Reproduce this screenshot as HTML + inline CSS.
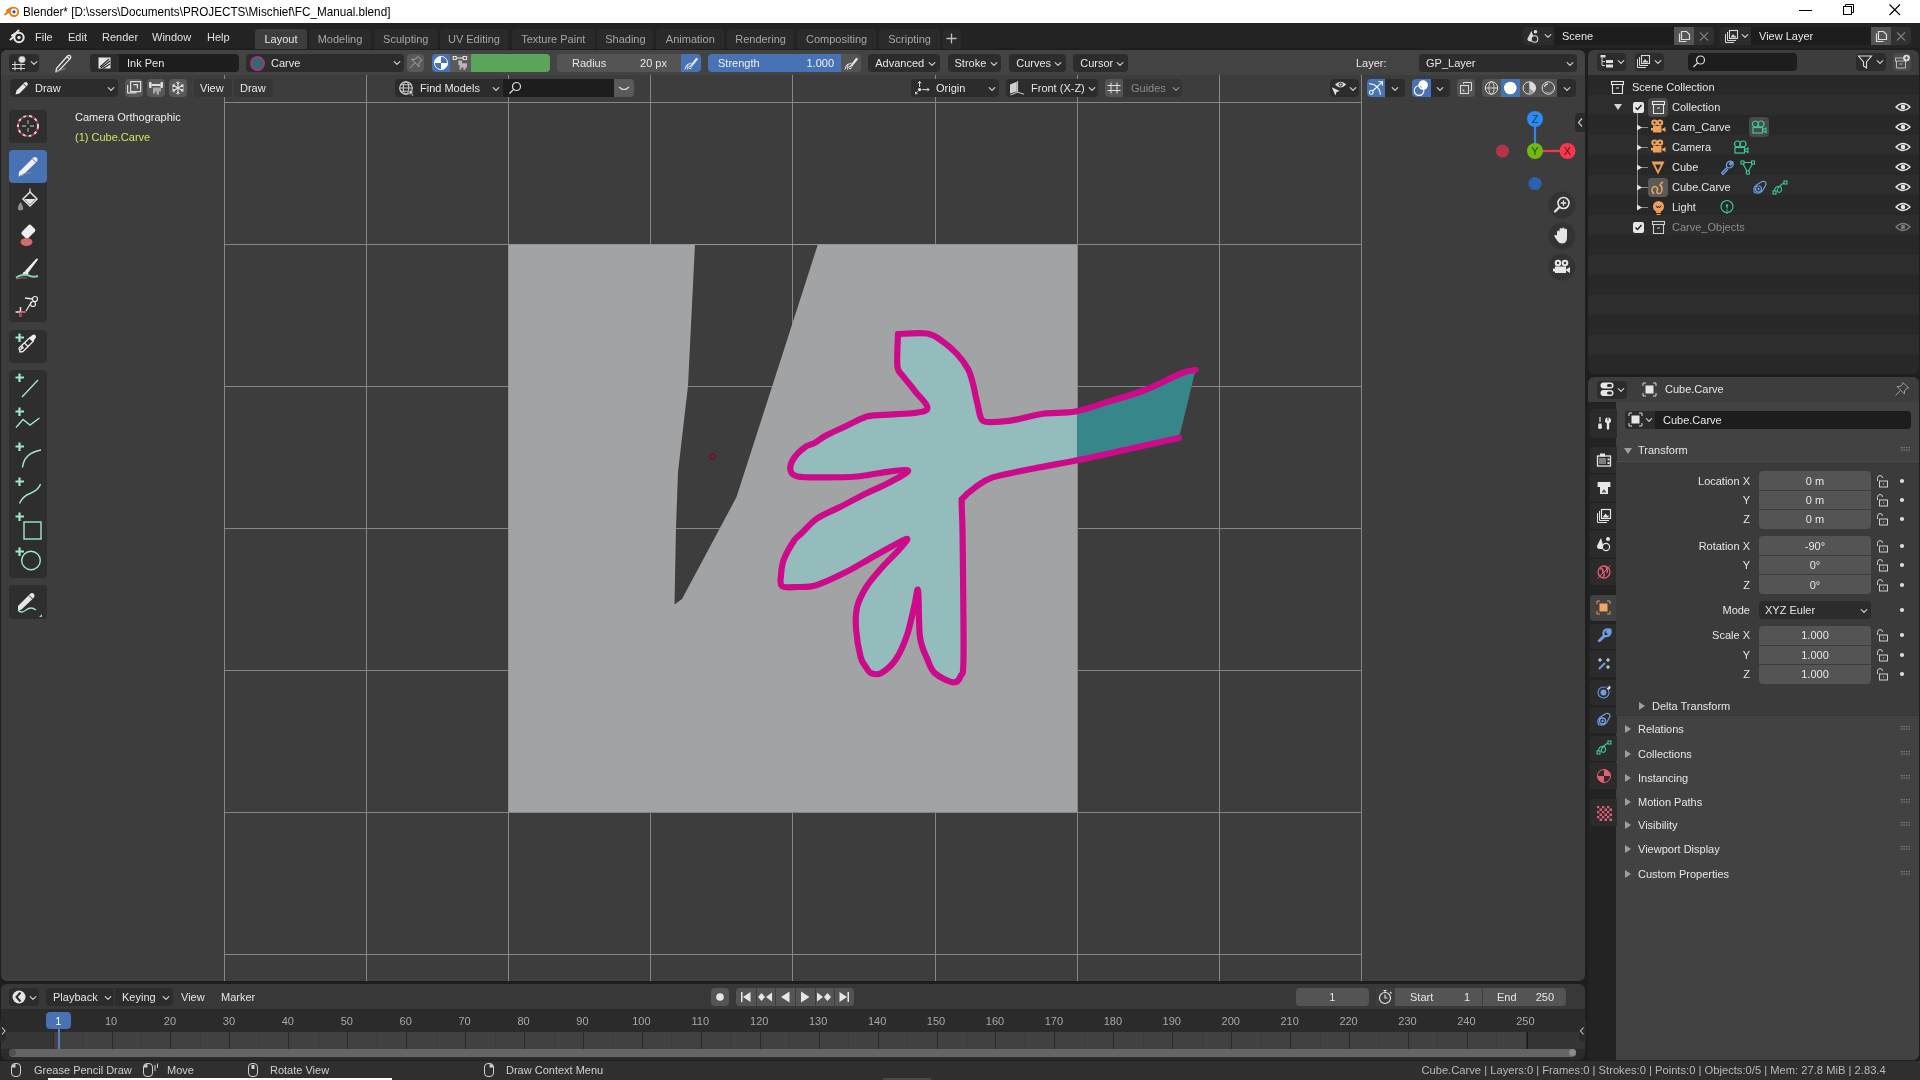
<!DOCTYPE html><html><head><meta charset="utf-8"><style>
*{margin:0;padding:0;box-sizing:border-box}
html,body{width:1920px;height:1080px;overflow:hidden;background:#1e1e1e;font-family:"Liberation Sans",sans-serif}
.a{position:absolute}
.t{position:absolute;height:16px;line-height:16px;white-space:nowrap}
#root{position:absolute;left:0;top:0;width:1920px;height:1080px;will-change:transform}
svg{position:absolute;overflow:visible}
</style></head><body><div id="root"><div class="a" style="left:0px;top:0px;width:1920px;height:23px;background:#ffffff;"></div><div class="a" style="left:0px;top:23px;width:1920px;height:27px;background:#232323;"></div><div class="a" style="left:1px;top:50px;width:1584px;height:931px;background:#3d3d3d;border-radius:6px;"></div><svg class="a" style="left:0;top:0" width="1920" height="1080" viewBox="0 0 1920 1080"><defs><clipPath id="vp"><rect x="1" y="75" width="1584" height="906"/></clipPath><clipPath id="sq"><rect x="509" y="244" width="568" height="568"/></clipPath><clipPath id="nsq"><path d="M0 0H1920V1080H0Z M509 244V812H1077V244Z" clip-rule="evenodd"/></clipPath></defs><g clip-path="url(#vp)"><rect x="224" y="75" width="1" height="906" fill="#868686"/><rect x="366" y="75" width="1" height="906" fill="#868686"/><rect x="508" y="75" width="1" height="906" fill="#868686"/><rect x="650" y="75" width="1" height="906" fill="#868686"/><rect x="792" y="75" width="1" height="906" fill="#868686"/><rect x="935" y="75" width="1" height="906" fill="#868686"/><rect x="1077" y="75" width="1" height="906" fill="#868686"/><rect x="1219" y="75" width="1" height="906" fill="#868686"/><rect x="1361" y="75" width="1" height="906" fill="#868686"/><rect x="224" y="102" width="1137" height="1" fill="#868686"/><rect x="224" y="244" width="1137" height="1" fill="#868686"/><rect x="224" y="386" width="1137" height="1" fill="#868686"/><rect x="224" y="528" width="1137" height="1" fill="#868686"/><rect x="224" y="670" width="1137" height="1" fill="#868686"/><rect x="224" y="812" width="1137" height="1" fill="#868686"/><rect x="224" y="954" width="1137" height="1" fill="#868686"/><path fill="#a2a3a5" fill-rule="evenodd" d="M508.6 244.6H1077V812H508.6Z M695 244L688 386L678 472L676 528L674.5 604.5L682 599L720 528L736.5 497L818 244Z"/><circle cx="712.4" cy="456.4" r="2.6" fill="#8a1a3a" stroke="#4a0a20" stroke-width="0.8"/></g></svg><svg class="a" style="left:0;top:0" width="1920" height="1080" viewBox="0 0 1920 1080"><defs><clipPath id="sq2"><rect x="509" y="244" width="568" height="568"/></clipPath><clipPath id="nsq2"><path d="M0 0H1920V1080H0Z M509 244V812H1077V244Z" clip-rule="evenodd"/></clipPath></defs><path d="M898 334 C902.6 333.9 920.0 332.4 927 333.5 C934.0 334.6 937.2 337.7 942 341 C946.8 344.3 952.8 349.5 957 354 C961.2 358.5 965.4 364.2 968 369 C970.6 373.8 971.5 378.4 973 384 C974.5 389.6 976.0 398.2 977.5 404 C979.0 409.8 979.4 417.7 982.5 420.5 C985.6 423.3 991.6 421.9 997 421.8 C1002.4 421.7 1008.6 420.9 1016 419.6 C1023.4 418.3 1033.5 415.0 1043 413.7 C1052.5 412.4 1065.1 413.4 1075.5 411.5 C1085.9 409.6 1096.9 405.2 1108 401.8 C1119.1 398.4 1133.2 394.6 1145 390 C1156.8 385.4 1173.9 376.2 1182 373 C1190.1 369.8 1193.3 370.5 1195.5 370 L1179 438 C1174.0 439.1 1159.4 442.3 1148 444.8 C1136.6 447.3 1119.4 451.2 1108 453.7 C1096.6 456.2 1088.8 457.9 1077 460.3 C1065.2 462.7 1047.5 465.8 1034 468.5 C1020.5 471.2 1002.1 474.3 992.6 477.4 C983.1 480.5 979.5 484.4 974.8 487.7 C970.1 491.0 965.1 495.6 963 498 C960.9 500.4 961.8 496.8 961.7 503 C961.6 509.2 962.3 512.3 962.6 537 C962.9 561.7 963.8 635.2 963.5 657.4 C963.2 679.6 962.3 672.0 960.7 676 C959.1 680.0 957.4 682.9 953.3 682.4 C949.2 681.9 938.9 676.8 934.8 673.1 C930.7 669.4 929.8 665.1 927.4 659.3 C925.0 653.5 921.5 648.0 920 637 C918.5 626.0 919.0 595.7 918.1 590.7 C917.2 585.7 916.2 598.5 914.4 605.6 C912.6 612.7 910.0 626.6 907 635.2 C904.0 643.8 900.0 653.2 895.9 659.3 C891.8 665.4 885.1 670.9 881.1 673.1 C877.1 675.3 873.3 674.0 870.9 673.1 C868.5 672.2 867.9 670.1 866.3 667.6 C864.7 665.1 862.3 663.5 860.7 657.4 C859.1 651.3 856.7 637.6 856.1 629.6 C855.5 621.6 855.4 614.2 857 607.4 C858.6 600.6 862.4 593.2 866.3 587 C870.2 580.8 875.8 574.6 881.1 568.5 C886.4 562.4 895.6 553.7 899.6 549 C903.6 544.3 910.2 537.7 906.1 538.9 C902.0 540.1 883.6 551.0 873.7 556.5 C863.8 562.0 853.2 568.5 844 573.1 C834.8 577.7 823.7 583.0 816.3 585.2 C808.9 587.4 803.3 586.9 797.8 587 C792.3 587.1 784.7 588.2 782 586.1 C779.3 584.0 780.8 578.3 781.1 574 C781.4 569.7 781.8 564.6 783.9 559.3 C786.0 554.0 791.2 544.9 794 540.7 C796.8 536.5 797.8 536.9 801.5 533.3 C805.2 529.7 810.8 522.7 817 518.5 C823.2 514.3 832.5 510.8 840 507 C847.5 503.2 855.9 498.5 864 494.5 C872.1 490.5 883.4 485.9 890.4 482 C897.4 478.1 909.5 471.9 908 470.4 C906.5 468.9 889.2 471.8 881 472.8 C872.8 473.8 865.9 475.8 857 476.5 C848.1 477.2 835.1 477.4 825.6 477.4 C816.1 477.4 803.4 477.7 797.8 476.5 C792.2 475.3 791.0 473.0 790.4 470 C789.8 467.0 791.6 461.7 794 458 C796.4 454.3 801.9 449.3 805.2 446.9 C808.5 444.5 811.1 444.9 814.4 443.1 C817.7 441.3 820.9 438.3 825.6 435.7 C830.3 433.1 838.1 429.8 844 427 C849.9 424.2 857.8 420.0 862.6 418.1 C867.4 416.2 863.6 416.6 873.7 415.4 C883.8 414.2 919.1 414.7 925.6 410.7 C932.1 406.7 918.0 395.9 914.4 390.4 C910.8 384.9 906.0 380.4 903.3 376.5 C900.6 372.6 898.2 373.1 897.4 366.3 C896.6 359.5 897.9 339.2 898 334 Z" fill="#94bcbc" clip-path="url(#sq2)"/><path d="M898 334 C902.6 333.9 920.0 332.4 927 333.5 C934.0 334.6 937.2 337.7 942 341 C946.8 344.3 952.8 349.5 957 354 C961.2 358.5 965.4 364.2 968 369 C970.6 373.8 971.5 378.4 973 384 C974.5 389.6 976.0 398.2 977.5 404 C979.0 409.8 979.4 417.7 982.5 420.5 C985.6 423.3 991.6 421.9 997 421.8 C1002.4 421.7 1008.6 420.9 1016 419.6 C1023.4 418.3 1033.5 415.0 1043 413.7 C1052.5 412.4 1065.1 413.4 1075.5 411.5 C1085.9 409.6 1096.9 405.2 1108 401.8 C1119.1 398.4 1133.2 394.6 1145 390 C1156.8 385.4 1173.9 376.2 1182 373 C1190.1 369.8 1193.3 370.5 1195.5 370 L1179 438 C1174.0 439.1 1159.4 442.3 1148 444.8 C1136.6 447.3 1119.4 451.2 1108 453.7 C1096.6 456.2 1088.8 457.9 1077 460.3 C1065.2 462.7 1047.5 465.8 1034 468.5 C1020.5 471.2 1002.1 474.3 992.6 477.4 C983.1 480.5 979.5 484.4 974.8 487.7 C970.1 491.0 965.1 495.6 963 498 C960.9 500.4 961.8 496.8 961.7 503 C961.6 509.2 962.3 512.3 962.6 537 C962.9 561.7 963.8 635.2 963.5 657.4 C963.2 679.6 962.3 672.0 960.7 676 C959.1 680.0 957.4 682.9 953.3 682.4 C949.2 681.9 938.9 676.8 934.8 673.1 C930.7 669.4 929.8 665.1 927.4 659.3 C925.0 653.5 921.5 648.0 920 637 C918.5 626.0 919.0 595.7 918.1 590.7 C917.2 585.7 916.2 598.5 914.4 605.6 C912.6 612.7 910.0 626.6 907 635.2 C904.0 643.8 900.0 653.2 895.9 659.3 C891.8 665.4 885.1 670.9 881.1 673.1 C877.1 675.3 873.3 674.0 870.9 673.1 C868.5 672.2 867.9 670.1 866.3 667.6 C864.7 665.1 862.3 663.5 860.7 657.4 C859.1 651.3 856.7 637.6 856.1 629.6 C855.5 621.6 855.4 614.2 857 607.4 C858.6 600.6 862.4 593.2 866.3 587 C870.2 580.8 875.8 574.6 881.1 568.5 C886.4 562.4 895.6 553.7 899.6 549 C903.6 544.3 910.2 537.7 906.1 538.9 C902.0 540.1 883.6 551.0 873.7 556.5 C863.8 562.0 853.2 568.5 844 573.1 C834.8 577.7 823.7 583.0 816.3 585.2 C808.9 587.4 803.3 586.9 797.8 587 C792.3 587.1 784.7 588.2 782 586.1 C779.3 584.0 780.8 578.3 781.1 574 C781.4 569.7 781.8 564.6 783.9 559.3 C786.0 554.0 791.2 544.9 794 540.7 C796.8 536.5 797.8 536.9 801.5 533.3 C805.2 529.7 810.8 522.7 817 518.5 C823.2 514.3 832.5 510.8 840 507 C847.5 503.2 855.9 498.5 864 494.5 C872.1 490.5 883.4 485.9 890.4 482 C897.4 478.1 909.5 471.9 908 470.4 C906.5 468.9 889.2 471.8 881 472.8 C872.8 473.8 865.9 475.8 857 476.5 C848.1 477.2 835.1 477.4 825.6 477.4 C816.1 477.4 803.4 477.7 797.8 476.5 C792.2 475.3 791.0 473.0 790.4 470 C789.8 467.0 791.6 461.7 794 458 C796.4 454.3 801.9 449.3 805.2 446.9 C808.5 444.5 811.1 444.9 814.4 443.1 C817.7 441.3 820.9 438.3 825.6 435.7 C830.3 433.1 838.1 429.8 844 427 C849.9 424.2 857.8 420.0 862.6 418.1 C867.4 416.2 863.6 416.6 873.7 415.4 C883.8 414.2 919.1 414.7 925.6 410.7 C932.1 406.7 918.0 395.9 914.4 390.4 C910.8 384.9 906.0 380.4 903.3 376.5 C900.6 372.6 898.2 373.1 897.4 366.3 C896.6 359.5 897.9 339.2 898 334 Z" fill="#37878a" clip-path="url(#nsq2)"/><path d="M898 334 C902.6 333.9 920.0 332.4 927 333.5 C934.0 334.6 937.2 337.7 942 341 C946.8 344.3 952.8 349.5 957 354 C961.2 358.5 965.4 364.2 968 369 C970.6 373.8 971.5 378.4 973 384 C974.5 389.6 976.0 398.2 977.5 404 C979.0 409.8 979.4 417.7 982.5 420.5 C985.6 423.3 991.6 421.9 997 421.8 C1002.4 421.7 1008.6 420.9 1016 419.6 C1023.4 418.3 1033.5 415.0 1043 413.7 C1052.5 412.4 1065.1 413.4 1075.5 411.5 C1085.9 409.6 1096.9 405.2 1108 401.8 C1119.1 398.4 1133.2 394.6 1145 390 C1156.8 385.4 1173.9 376.2 1182 373 C1190.1 369.8 1193.3 370.5 1195.5 370" fill="none" stroke="#cc0a8a" stroke-width="6.2" stroke-linejoin="round" stroke-linecap="round"/><path d="M1179 438 C1174.0 439.1 1159.4 442.3 1148 444.8 C1136.6 447.3 1119.4 451.2 1108 453.7 C1096.6 456.2 1088.8 457.9 1077 460.3 C1065.2 462.7 1047.5 465.8 1034 468.5 C1020.5 471.2 1002.1 474.3 992.6 477.4 C983.1 480.5 979.5 484.4 974.8 487.7 C970.1 491.0 965.1 495.6 963 498 C960.9 500.4 961.8 496.8 961.7 503 C961.6 509.2 962.3 512.3 962.6 537 C962.9 561.7 963.8 635.2 963.5 657.4 C963.2 679.6 962.3 672.0 960.7 676 C959.1 680.0 957.4 682.9 953.3 682.4 C949.2 681.9 938.9 676.8 934.8 673.1 C930.7 669.4 929.8 665.1 927.4 659.3 C925.0 653.5 921.5 648.0 920 637 C918.5 626.0 919.0 595.7 918.1 590.7 C917.2 585.7 916.2 598.5 914.4 605.6 C912.6 612.7 910.0 626.6 907 635.2 C904.0 643.8 900.0 653.2 895.9 659.3 C891.8 665.4 885.1 670.9 881.1 673.1 C877.1 675.3 873.3 674.0 870.9 673.1 C868.5 672.2 867.9 670.1 866.3 667.6 C864.7 665.1 862.3 663.5 860.7 657.4 C859.1 651.3 856.7 637.6 856.1 629.6 C855.5 621.6 855.4 614.2 857 607.4 C858.6 600.6 862.4 593.2 866.3 587 C870.2 580.8 875.8 574.6 881.1 568.5 C886.4 562.4 895.6 553.7 899.6 549 C903.6 544.3 910.2 537.7 906.1 538.9 C902.0 540.1 883.6 551.0 873.7 556.5 C863.8 562.0 853.2 568.5 844 573.1 C834.8 577.7 823.7 583.0 816.3 585.2 C808.9 587.4 803.3 586.9 797.8 587 C792.3 587.1 784.7 588.2 782 586.1 C779.3 584.0 780.8 578.3 781.1 574 C781.4 569.7 781.8 564.6 783.9 559.3 C786.0 554.0 791.2 544.9 794 540.7 C796.8 536.5 797.8 536.9 801.5 533.3 C805.2 529.7 810.8 522.7 817 518.5 C823.2 514.3 832.5 510.8 840 507 C847.5 503.2 855.9 498.5 864 494.5 C872.1 490.5 883.4 485.9 890.4 482 C897.4 478.1 909.5 471.9 908 470.4 C906.5 468.9 889.2 471.8 881 472.8 C872.8 473.8 865.9 475.8 857 476.5 C848.1 477.2 835.1 477.4 825.6 477.4 C816.1 477.4 803.4 477.7 797.8 476.5 C792.2 475.3 791.0 473.0 790.4 470 C789.8 467.0 791.6 461.7 794 458 C796.4 454.3 801.9 449.3 805.2 446.9 C808.5 444.5 811.1 444.9 814.4 443.1 C817.7 441.3 820.9 438.3 825.6 435.7 C830.3 433.1 838.1 429.8 844 427 C849.9 424.2 857.8 420.0 862.6 418.1 C867.4 416.2 863.6 416.6 873.7 415.4 C883.8 414.2 919.1 414.7 925.6 410.7 C932.1 406.7 918.0 395.9 914.4 390.4 C910.8 384.9 906.0 380.4 903.3 376.5 C900.6 372.6 898.2 373.1 897.4 366.3 C896.6 359.5 897.9 339.2 898 334" fill="none" stroke="#cc0a8a" stroke-width="6.2" stroke-linejoin="round" stroke-linecap="round"/></svg><svg class="a" style="left:2px;top:4px;" width="18" height="16" viewBox="0 0 18 16"><path d="M3 10.5 L8 6.8 L4.8 6.8 L8.5 4.2 L11 4" stroke="#e87d0d" stroke-width="2" fill="none" stroke-linecap="round" stroke-linejoin="round"/><circle cx="12" cy="7.8" r="4.2" fill="#fff" stroke="#e87d0d" stroke-width="1.9"/><circle cx="12" cy="7.8" r="1.6" fill="#265787"/></svg><div class="t" style="left:23px;top:4.0px;font-size:13px;color:#000000;transform:scaleX(0.9);transform-origin:0 50%;">Blender* [D:\ssers\Documents\PROJECTS\Mischief\FC_Manual.blend]</div><svg class="a" style="left:1798px;top:5px;" width="16" height="12" viewBox="0 0 16 12"><rect x="1" y="5" width="13" height="1" fill="#000"/></svg><svg class="a" style="left:1842px;top:3px;" width="14" height="14" viewBox="0 0 14 14"><rect x="1.5" y="3.5" width="8" height="8" fill="none" stroke="#000" stroke-width="1"/><path d="M3.5 3.5V1.5H11.5V9.5H9.5" fill="none" stroke="#000" stroke-width="1"/></svg><svg class="a" style="left:1888px;top:3px;" width="14" height="14" viewBox="0 0 14 14"><path d="M1.5 1.5L12 12M12 1.5L1.5 12" stroke="#000" stroke-width="1.1"/></svg><div class="a" style="left:0px;top:48px;width:1920px;height:2px;background:#1e1e1e;"></div><svg class="a" style="left:9px;top:28px;" width="18" height="16" viewBox="0 0 18 16"><path d="M1.5 11.5 L6.5 7.5 L3 7.5 L7.5 4.5 L9.5 2.5" stroke="#e6e6e6" stroke-width="2" fill="none" stroke-linecap="round" stroke-linejoin="round"/><circle cx="10" cy="9.5" r="4.7" fill="#232323" stroke="#e6e6e6" stroke-width="2"/><circle cx="10" cy="9.5" r="1.7" fill="#e6e6e6"/></svg><div class="t" style="left:35px;top:28.5px;font-size:11px;color:#e0e0e0;">File</div><div class="t" style="left:68px;top:28.5px;font-size:11px;color:#e0e0e0;">Edit</div><div class="t" style="left:102px;top:28.5px;font-size:11px;color:#e0e0e0;">Render</div><div class="t" style="left:152px;top:28.5px;font-size:11px;color:#e0e0e0;">Window</div><div class="t" style="left:207px;top:28.5px;font-size:11px;color:#e0e0e0;">Help</div><div class="a" style="left:255px;top:29px;width:52px;height:20px;background:#3d3d3d;border-radius:4px 4px 0 0;"></div><div class="t" style="left:231.0px;width:100px;top:30.5px;text-align:center;font-size:11px;color:#e6e6e6;">Layout</div><div class="a" style="left:309px;top:29px;width:62px;height:20px;background:#2a2a2a;border-radius:4px 4px 0 0;"></div><div class="t" style="left:290.0px;width:100px;top:30.5px;text-align:center;font-size:11px;color:#a6a6a6;">Modeling</div><div class="a" style="left:374px;top:29px;width:63.5px;height:20px;background:#2a2a2a;border-radius:4px 4px 0 0;"></div><div class="t" style="left:355.75px;width:100px;top:30.5px;text-align:center;font-size:11px;color:#a6a6a6;">Sculpting</div><div class="a" style="left:439.6px;top:29px;width:68.69999999999999px;height:20px;background:#2a2a2a;border-radius:4px 4px 0 0;"></div><div class="t" style="left:423.95000000000005px;width:100px;top:30.5px;text-align:center;font-size:11px;color:#a6a6a6;">UV Editing</div><div class="a" style="left:511.5px;top:29px;width:83.5px;height:20px;background:#2a2a2a;border-radius:4px 4px 0 0;"></div><div class="t" style="left:503.25px;width:100px;top:30.5px;text-align:center;font-size:11px;color:#a6a6a6;">Texture Paint</div><div class="a" style="left:597.3px;top:29px;width:56.200000000000045px;height:20px;background:#2a2a2a;border-radius:4px 4px 0 0;"></div><div class="t" style="left:575.4px;width:100px;top:30.5px;text-align:center;font-size:11px;color:#a6a6a6;">Shading</div><div class="a" style="left:656.25px;top:29px;width:68.14999999999998px;height:20px;background:#2a2a2a;border-radius:4px 4px 0 0;"></div><div class="t" style="left:640.325px;width:100px;top:30.5px;text-align:center;font-size:11px;color:#a6a6a6;">Animation</div><div class="a" style="left:727px;top:29px;width:67.20000000000005px;height:20px;background:#2a2a2a;border-radius:4px 4px 0 0;"></div><div class="t" style="left:710.6px;width:100px;top:30.5px;text-align:center;font-size:11px;color:#a6a6a6;">Rendering</div><div class="a" style="left:796.7px;top:29px;width:79.79999999999995px;height:20px;background:#2a2a2a;border-radius:4px 4px 0 0;"></div><div class="t" style="left:786.6px;width:100px;top:30.5px;text-align:center;font-size:11px;color:#a6a6a6;">Compositing</div><div class="a" style="left:879.2px;top:29px;width:60.799999999999955px;height:20px;background:#2a2a2a;border-radius:4px 4px 0 0;"></div><div class="t" style="left:859.6px;width:100px;top:30.5px;text-align:center;font-size:11px;color:#a6a6a6;">Scripting</div><div class="a" style="left:942.5px;top:29px;width:18.3px;height:20px;background:#2a2a2a;border-radius:4px 4px 0 0;"></div><svg class="a" style="left:945px;top:32px;" width="13" height="13" viewBox="0 0 13 13"><path d="M6.5 1.5V11.5M1.5 6.5H11.5" stroke="#bdbdbd" stroke-width="1.3"/></svg><div class="a" style="left:1523px;top:27px;width:191px;height:18px;background:#2c2c2c;border-radius:4px;"></div><div class="a" style="left:1554.4px;top:27px;width:120px;height:18px;background:#1d1d1d;"></div><div class="a" style="left:1674.4px;top:27px;width:19.6px;height:18px;background:#545454;"></div><div class="a" style="left:1694px;top:27px;width:20px;height:18px;background:#313131;border-radius:0 4px 4px 0;"></div><svg class="a" style="left:1526px;top:29px;" width="22" height="15" viewBox="0 0 22 15"><path d="M5.5 2 L1.5 9.5 Q1 12.5 4.5 12.5 H7 Q9.5 12 8 9 Z" fill="#d8d8d8"/><circle cx="9.5" cy="2.8" r="1.8" fill="#d8d8d8"/><circle cx="8.5" cy="10" r="3.3" fill="#2c2c2c" stroke="#d8d8d8" stroke-width="1.1"/></svg><svg class="a" style="left:1542px;top:30px;" width="12" height="12" viewBox="0 0 12 12"><polyline points="3.2,4.6 6,7.4 8.8,4.6" fill="none" stroke="#c8c8c8" stroke-width="1.3" stroke-linecap="round" stroke-linejoin="round"/></svg><div class="t" style="left:1562px;top:28.0px;font-size:11px;color:#e6e6e6;">Scene</div><svg class="a" style="left:1676px;top:29px;" width="16" height="15" viewBox="0 0 16 15"><path d="M3.5 4.5V12.5H10.5" fill="none" stroke="#dcdcdc" stroke-width="1.2"/><path d="M5.5 2.5H10.5L13.5 5.5V10.5H5.5Z" fill="none" stroke="#dcdcdc" stroke-width="1.2"/></svg><svg class="a" style="left:1697px;top:29px;" width="14" height="15" viewBox="0 0 14 15"><path d="M3 3.5L11 11.5M11 3.5L3 11.5" stroke="#7e7e7e" stroke-width="1.1"/></svg><div class="a" style="left:1720.3px;top:27px;width:191px;height:18px;background:#2c2c2c;border-radius:4px;"></div><div class="a" style="left:1751.3px;top:27px;width:120px;height:18px;background:#1d1d1d;"></div><div class="a" style="left:1871.3px;top:27px;width:19.9px;height:18px;background:#545454;"></div><div class="a" style="left:1891.2px;top:27px;width:20px;height:18px;background:#313131;border-radius:0 4px 4px 0;"></div><svg class="a" style="left:1724px;top:29px;" width="16" height="15" viewBox="0 0 16 15"><path d="M1.5 5V13.5H10" fill="none" stroke="#d8d8d8" stroke-width="1"/><path d="M3.5 3V11.5H12" fill="none" stroke="#d8d8d8" stroke-width="1"/><rect x="5.5" y="1.5" width="8" height="8" fill="none" stroke="#d8d8d8" stroke-width="1.1"/><path d="M6.5 8.5L9 5L11 7.5L12 6.5V8.5Z" fill="#d8d8d8"/></svg><svg class="a" style="left:1739px;top:30px;" width="12" height="12" viewBox="0 0 12 12"><polyline points="3.2,4.6 6,7.4 8.8,4.6" fill="none" stroke="#c8c8c8" stroke-width="1.3" stroke-linecap="round" stroke-linejoin="round"/></svg><div class="t" style="left:1759px;top:28.0px;font-size:11px;color:#e6e6e6;">View Layer</div><svg class="a" style="left:1873px;top:29px;" width="16" height="15" viewBox="0 0 16 15"><path d="M3.5 4.5V12.5H10.5" fill="none" stroke="#dcdcdc" stroke-width="1.2"/><path d="M5.5 2.5H10.5L13.5 5.5V10.5H5.5Z" fill="none" stroke="#dcdcdc" stroke-width="1.2"/></svg><svg class="a" style="left:1894px;top:29px;" width="14" height="15" viewBox="0 0 14 15"><path d="M3 3.5L11 11.5M11 3.5L3 11.5" stroke="#7e7e7e" stroke-width="1.1"/></svg><div class="a" style="left:1px;top:50px;width:1584px;height:25px;background:#434343;border-radius:6px 6px 0 0;"></div><div class="a" style="left:9px;top:54px;width:30px;height:18px;background:#2c2c2c;border-radius:4px;"></div><svg class="a" style="left:11px;top:55px;" width="18" height="16" viewBox="0 0 18 16"><circle cx="11" cy="4.5" r="3.3" fill="#e0e0e0" stroke="#9a9a9a" stroke-width="0.6"/><path d="M1 9.5H14M1 13.5H14M4 6.5V15.5M10 8.5V15.5" stroke="#d6d6d6" stroke-width="1.1" fill="none"/></svg><svg class="a" style="left:27.5px;top:57px;" width="12" height="12" viewBox="0 0 12 12"><polyline points="3.2,4.6 6,7.4 8.8,4.6" fill="none" stroke="#c8c8c8" stroke-width="1.3" stroke-linecap="round" stroke-linejoin="round"/></svg><svg class="a" style="left:52px;top:53px;" width="22" height="20" viewBox="0 0 22 20"><path d="M4.5 15.5 L15.5 3 Q17 1.6 18.3 3 Q19.5 4.3 18.2 5.6 L7 17.5 L4 18.5Z" fill="none" stroke="#e6e6e6" stroke-width="1.3"/><path d="M15 3.8L17.5 6.2" stroke="#e6e6e6" stroke-width="1.3"/><path d="M3.5 19.5 Q9 16.5 13.5 15.5" fill="none" stroke="#8a8a8a" stroke-width="1"/></svg><div class="a" style="left:89.6px;top:54px;width:149.4px;height:18px;background:#1d1d1d;border-radius:4px;"></div><div class="a" style="left:89.6px;top:54px;width:29.8px;height:18px;background:#2c2c2c;border-radius:4px 0 0 4px;"></div><svg class="a" style="left:97px;top:56px;" width="15" height="14" viewBox="0 0 15 14"><path d="M1.5 1.5H13.5V12.5H1.5Z" fill="#e6e6e6"/><path d="M3 11 L12 3 M4 12 L13 5 M6 12.5L13 8" stroke="#2c2c2c" stroke-width="1.1"/></svg><div class="t" style="left:127px;top:55.0px;font-size:11px;color:#e6e6e6;">Ink Pen</div><div class="a" style="left:246.25px;top:54px;width:157.75px;height:18px;background:#2c2c2c;border-radius:4px;"></div><svg class="a" style="left:249px;top:55px;" width="17" height="17" viewBox="0 0 17 17"><circle cx="8.5" cy="8.5" r="6.6" fill="#2d6b6e" stroke="#b3307e" stroke-width="1.6"/></svg><div class="t" style="left:271px;top:55.0px;font-size:11px;color:#e6e6e6;">Carve</div><svg class="a" style="left:391px;top:57px;" width="12" height="12" viewBox="0 0 12 12"><polyline points="3.2,4.6 6,7.4 8.8,4.6" fill="none" stroke="#c8c8c8" stroke-width="1.3" stroke-linecap="round" stroke-linejoin="round"/></svg><div class="a" style="left:406.7px;top:54px;width:17.05000000000001px;height:18px;background:#595959;border-radius:4px;"></div><svg class="a" style="left:408px;top:55px;" width="15" height="16" viewBox="0 0 15 16"><path d="M10 1.5 L13.8 5.3 L12.6 6 L10.6 9.2 L11 11.6 L3.6 4.2 L6 4.6 L9.2 2.6 Z" fill="none" stroke="#b0b0b0" stroke-width="0.9" stroke-linejoin="round"/><path d="M6.8 8 L2 12.8" stroke="#b0b0b0" stroke-width="0.9"/></svg><div class="a" style="left:431.7px;top:54px;width:18.100000000000023px;height:18px;background:#4772b3;border-radius:4px 0 0 4px;"></div><svg class="a" style="left:433px;top:55px;" width="16" height="16" viewBox="0 0 16 16"><circle cx="8" cy="8" r="6.6" fill="#fff"/><path d="M8 1.4 A6.6 6.6 0 0 1 14.6 8 H8Z" fill="#4772b3"/><path d="M8 14.6 A6.6 6.6 0 0 1 1.4 8 H8Z" fill="#4772b3"/><circle cx="8" cy="8" r="6.6" fill="none" stroke="#fff" stroke-width="0.9"/></svg><div class="a" style="left:449.8px;top:54px;width:20.8px;height:18px;background:#5a5a5a;"></div><svg class="a" style="left:451px;top:55px;" width="18" height="16" viewBox="0 0 18 16"><rect x="2.2" y="1.5" width="3" height="3" fill="none" stroke="#e0e0e0" stroke-width="1.1"/><rect x="12.2" y="1.5" width="3.4" height="3" fill="none" stroke="#e0e0e0" stroke-width="1.1"/><path d="M5.2 3H12.2" stroke="#e0e0e0" stroke-width="1.1"/><path d="M7.3 5.6H11V8.2H16V12.4H14.4V14.8H12.4V12.4H10.2V14.8H8.6V10H7.3Z" fill="#b8b8b8"/></svg><div class="a" style="left:470.6px;top:54px;width:79.19999999999993px;height:18px;background:#5ba55b;border-radius:0 4px 4px 0;"></div><div class="a" style="left:557px;top:54px;width:124.25px;height:18px;background:#545454;border-radius:4px 0 0 4px;"></div><div class="t" style="left:572px;top:55.0px;font-size:11px;color:#e6e6e6;">Radius</div><div class="t" style="left:607px;width:60px;top:55.0px;text-align:right;font-size:11px;color:#e6e6e6;">20 px</div><div class="a" style="left:681.25px;top:54px;width:20.0px;height:18px;background:#4772b3;border-radius:0 4px 4px 0;"></div><svg class="a" style="left:682px;top:55px;" width="18" height="16" viewBox="0 0 18 16"><path d="M8 11 L13.5 3.5 Q14.5 2.3 15.5 3.3 Q16.3 4.3 15.3 5.3 L10 11.5 Z" fill="#e6e6e6"/><path d="M5.5 14.5 A5 5 0 0 1 9.5 8" fill="none" stroke="#e6e6e6" stroke-width="1"/><path d="M3 14.5 A7.5 7.5 0 0 1 6.5 8.5" fill="none" stroke="#e6e6e6" stroke-width="1"/><circle cx="8" cy="12.5" r="1.3" fill="none" stroke="#e6e6e6" stroke-width="1"/></svg><div class="a" style="left:708px;top:54px;width:133.25px;height:18px;background:#4772b3;border-radius:4px 0 0 4px;"></div><div class="t" style="left:718px;top:55.0px;font-size:11px;color:#f0f0f0;">Strength</div><div class="t" style="left:774px;width:60px;top:55.0px;text-align:right;font-size:11px;color:#f0f0f0;">1.000</div><div class="a" style="left:841.25px;top:54px;width:19.25px;height:18px;background:#545454;border-radius:0 4px 4px 0;"></div><svg class="a" style="left:842px;top:55px;" width="18" height="16" viewBox="0 0 18 16"><path d="M8 11 L13.5 3.5 Q14.5 2.3 15.5 3.3 Q16.3 4.3 15.3 5.3 L10 11.5 Z" fill="#e6e6e6"/><path d="M5.5 14.5 A5 5 0 0 1 9.5 8" fill="none" stroke="#e6e6e6" stroke-width="1"/><path d="M3 14.5 A7.5 7.5 0 0 1 6.5 8.5" fill="none" stroke="#e6e6e6" stroke-width="1"/><circle cx="8" cy="12.5" r="1.3" fill="none" stroke="#e6e6e6" stroke-width="1"/></svg><div class="a" style="left:868.25px;top:54px;width:71.25px;height:18px;background:#2c2c2c;border-radius:4px;"></div><div class="t" style="left:875.25px;top:55.0px;font-size:11px;color:#e6e6e6;">Advanced</div><svg class="a" style="left:926.0px;top:57.5px;" width="12" height="12" viewBox="0 0 12 12"><polyline points="3.2,4.6 6,7.4 8.8,4.6" fill="none" stroke="#c8c8c8" stroke-width="1.3" stroke-linecap="round" stroke-linejoin="round"/></svg><div class="a" style="left:947.5px;top:54px;width:53.75px;height:18px;background:#2c2c2c;border-radius:4px;"></div><div class="t" style="left:954.5px;top:55.0px;font-size:11px;color:#e6e6e6;">Stroke</div><svg class="a" style="left:987.75px;top:57.5px;" width="12" height="12" viewBox="0 0 12 12"><polyline points="3.2,4.6 6,7.4 8.8,4.6" fill="none" stroke="#c8c8c8" stroke-width="1.3" stroke-linecap="round" stroke-linejoin="round"/></svg><div class="a" style="left:1009.25px;top:54px;width:56.25px;height:18px;background:#2c2c2c;border-radius:4px;"></div><div class="t" style="left:1016.25px;top:55.0px;font-size:11px;color:#e6e6e6;">Curves</div><svg class="a" style="left:1052.0px;top:57.5px;" width="12" height="12" viewBox="0 0 12 12"><polyline points="3.2,4.6 6,7.4 8.8,4.6" fill="none" stroke="#c8c8c8" stroke-width="1.3" stroke-linecap="round" stroke-linejoin="round"/></svg><div class="a" style="left:1073.25px;top:54px;width:54.25px;height:18px;background:#2c2c2c;border-radius:4px;"></div><div class="t" style="left:1080.25px;top:55.0px;font-size:11px;color:#e6e6e6;">Cursor</div><svg class="a" style="left:1114.0px;top:57.5px;" width="12" height="12" viewBox="0 0 12 12"><polyline points="3.2,4.6 6,7.4 8.8,4.6" fill="none" stroke="#c8c8c8" stroke-width="1.3" stroke-linecap="round" stroke-linejoin="round"/></svg><div class="t" style="left:1356px;top:55.0px;font-size:11px;color:#e6e6e6;">Layer:</div><div class="a" style="left:1419.25px;top:54px;width:157.75px;height:18px;background:#2c2c2c;border-radius:4px;"></div><div class="t" style="left:1426px;top:55.0px;font-size:11px;color:#e6e6e6;">GP_Layer</div><svg class="a" style="left:1564px;top:57.5px;" width="12" height="12" viewBox="0 0 12 12"><polyline points="3.2,4.6 6,7.4 8.8,4.6" fill="none" stroke="#c8c8c8" stroke-width="1.3" stroke-linecap="round" stroke-linejoin="round"/></svg><div class="a" style="left:9.8px;top:79px;width:107.9px;height:18px;background:#2c2c2c;border-radius:4px;"></div><svg class="a" style="left:13px;top:80px;" width="17" height="17" viewBox="0 0 17 17"><path d="M2.5 14.5 L3.5 10.5 L11.5 2.5 Q13 1.3 14.3 2.7 Q15.6 4 14.3 5.5 L6.5 13.5 Z" fill="#e6e6e6"/><path d="M10.3 3.7L13.3 6.7" stroke="#2c2c2c" stroke-width="1"/></svg><div class="t" style="left:35px;top:80.0px;font-size:11px;color:#e6e6e6;">Draw</div><svg class="a" style="left:105px;top:82.5px;" width="12" height="12" viewBox="0 0 12 12"><polyline points="3.2,4.6 6,7.4 8.8,4.6" fill="none" stroke="#c8c8c8" stroke-width="1.3" stroke-linecap="round" stroke-linejoin="round"/></svg><div class="a" style="left:125px;top:79px;width:17.69999999999999px;height:18px;background:#585858;border-radius:4px;"></div><div class="a" style="left:147px;top:79px;width:17.69999999999999px;height:18px;background:#585858;border-radius:4px;"></div><div class="a" style="left:169px;top:79px;width:17.69999999999999px;height:18px;background:#585858;border-radius:4px;"></div><svg class="a" style="left:126px;top:80px;" width="16" height="16" viewBox="0 0 16 16"><rect x="4.6" y="1.6" width="10" height="10" fill="none" stroke="#dcdcdc" stroke-width="1.2"/><path d="M7.4 4.6 H11.4 V8.6" fill="none" stroke="#dcdcdc" stroke-width="1.2"/><path d="M1.6 5 V12.8 H10.6" fill="none" stroke="#dcdcdc" stroke-width="1.2"/></svg><svg class="a" style="left:148px;top:80px;" width="16" height="16" viewBox="0 0 16 16"><rect x="1" y="2" width="2.6" height="6" rx="1" fill="#e0e0e0"/><rect x="12.4" y="2" width="2.6" height="6" rx="1" fill="#e0e0e0"/><rect x="3.6" y="4" width="8.8" height="2" fill="#e0e0e0"/><path d="M5 7.5H13V11.5H11V14.5H8.5V11.5H7V13.5H5Z" fill="#a8a8a8"/></svg><svg class="a" style="left:170px;top:80px;" width="16" height="16" viewBox="0 0 16 16"><path d="M8 1.5V14.5M2.4 4.8L13.6 11.2M2.4 11.2L13.6 4.8" stroke="#e6e6e6" stroke-width="1.1" fill="none"/><path d="M6.3 2.3L8 4L9.7 2.3M6.3 13.7L8 12L9.7 13.7M2.2 7L4.6 6.2L4 3.8M13.8 9L11.4 9.8L12 12.2M2.2 9L4.6 9.8L4 12.2M13.8 7L11.4 6.2L12 3.8" stroke="#e6e6e6" stroke-width="1" fill="none"/></svg><div class="a" style="left:194.2px;top:79px;width:37.5px;height:18px;background:#363636;border-radius:4px;"></div><div class="t" style="left:200px;top:80.0px;font-size:11px;color:#e6e6e6;">View</div><div class="a" style="left:234.4px;top:79px;width:39.099999999999994px;height:18px;background:#363636;border-radius:4px;"></div><div class="t" style="left:240px;top:80.0px;font-size:11px;color:#e6e6e6;">Draw</div><div class="a" style="left:395px;top:79px;width:108px;height:18px;background:#2c2c2c;border-radius:4px 0 0 4px;"></div><svg class="a" style="left:398px;top:80px;" width="18" height="17" viewBox="0 0 18 17"><circle cx="8" cy="8" r="6.3" fill="none" stroke="#ddd" stroke-width="1.1"/><ellipse cx="8" cy="8" rx="2.8" ry="6.3" fill="none" stroke="#ddd" stroke-width="1"/><path d="M1.7 8H14.3M2.6 4.8H13.4M2.6 11.2H13.4" stroke="#ddd" stroke-width="0.9"/><path d="M11 10 L16 12 L13.8 13 L15.5 15.5 L14.5 16.2 L12.8 13.8 L11.5 15.5Z" fill="#ddd" stroke="#2c2c2c" stroke-width="0.6"/></svg><div class="t" style="left:420px;top:80.0px;font-size:11px;color:#e6e6e6;">Find Models</div><svg class="a" style="left:490px;top:82.5px;" width="12" height="12" viewBox="0 0 12 12"><polyline points="3.2,4.6 6,7.4 8.8,4.6" fill="none" stroke="#c8c8c8" stroke-width="1.3" stroke-linecap="round" stroke-linejoin="round"/></svg><div class="a" style="left:503px;top:79px;width:110.75px;height:18px;background:#1d1d1d;"></div><svg class="a" style="left:507px;top:80px;" width="16" height="17" viewBox="0 0 16 17"><circle cx="9.5" cy="6.5" r="4" fill="none" stroke="#ddd" stroke-width="1.2"/><path d="M6.6 9.4 L2.5 13.5" stroke="#ddd" stroke-width="1.3"/></svg><div class="a" style="left:613.75px;top:79px;width:20.0px;height:18px;background:#595959;border-radius:0 4px 4px 0;"></div><svg class="a" style="left:616px;top:80px;" width="16" height="16" viewBox="0 0 16 16"><path d="M3 7 Q8 12 13 7" fill="none" stroke="#ddd" stroke-width="1.1"/></svg><div class="a" style="left:911.25px;top:79px;width:87.5px;height:18px;background:#2c2c2c;border-radius:4px;"></div><svg class="a" style="left:914px;top:80px;" width="18" height="17" viewBox="0 0 18 17"><circle cx="5.6" cy="9.6" r="1.7" fill="#e0e0e0"/><path d="M5.6 7V1.6 M3.9 3.3L5.6 1.5L7.3 3.3 M8.2 9.6H15 M13.3 7.9L15 9.6L13.3 11.3 M3.9 11.3 L1.5 13.7 M1.5 11.9V13.8H3.4" fill="none" stroke="#e0e0e0" stroke-width="1"/></svg><div class="t" style="left:936px;top:80.0px;font-size:11px;color:#e6e6e6;">Origin</div><svg class="a" style="left:986px;top:82.5px;" width="12" height="12" viewBox="0 0 12 12"><polyline points="3.2,4.6 6,7.4 8.8,4.6" fill="none" stroke="#c8c8c8" stroke-width="1.3" stroke-linecap="round" stroke-linejoin="round"/></svg><div class="a" style="left:1006.25px;top:79px;width:91.25px;height:18px;background:#2c2c2c;border-radius:4px;"></div><svg class="a" style="left:1009px;top:80px;" width="18" height="17" viewBox="0 0 18 17"><path d="M1 4.5 L7.8 1.8 V11.6 L1 13.6Z" fill="#d0d0d0"/><path d="M8.6 1V12.2 L15 14.2 M8.6 12.2 L1.5 15" fill="none" stroke="#d0d0d0" stroke-width="1"/></svg><div class="t" style="left:1031px;top:80.0px;font-size:11px;color:#e6e6e6;">Front (X-Z)</div><svg class="a" style="left:1086px;top:82.5px;" width="12" height="12" viewBox="0 0 12 12"><polyline points="3.2,4.6 6,7.4 8.8,4.6" fill="none" stroke="#c8c8c8" stroke-width="1.3" stroke-linecap="round" stroke-linejoin="round"/></svg><div class="a" style="left:1105px;top:79px;width:77px;height:18px;background:#353535;border-radius:4px;"></div><div class="a" style="left:1105px;top:79px;width:18px;height:18px;background:#545454;border-radius:4px 0 0 4px;"></div><svg class="a" style="left:1106px;top:80px;" width="16" height="16" viewBox="0 0 16 16"><path d="M1.5 5.5H14.5M1.5 10.5H14.5M5 2.5V13.5M11 2.5V13.5" stroke="#e0e0e0" stroke-width="1" fill="none"/></svg><div class="t" style="left:1131px;top:80.0px;font-size:11px;color:#8c8c8c;">Guides</div><svg class="a" style="left:1170px;top:82.5px;" width="12" height="12" viewBox="0 0 12 12"><polyline points="3.2,4.6 6,7.4 8.8,4.6" fill="none" stroke="#8c8c8c" stroke-width="1.3" stroke-linecap="round" stroke-linejoin="round"/></svg><div class="a" style="left:1330px;top:79px;width:29.25px;height:18px;background:#2c2c2c;border-radius:4px;"></div><svg class="a" style="left:1331px;top:80px;" width="18" height="17" viewBox="0 0 18 17"><path d="M4 4.6 Q9.6 -1.2 15.2 4.6 Q9.6 10.4 4 4.6Z" fill="#e0e0e0"/><circle cx="9.6" cy="4.6" r="2.1" fill="#2c2c2c"/><circle cx="9.6" cy="4.6" r="1.1" fill="#e0e0e0"/><path d="M0.8 7.2 L8.8 11 L5.6 12 L4.4 15.6Z" fill="#e0e0e0"/></svg><svg class="a" style="left:1347px;top:82.5px;" width="12" height="12" viewBox="0 0 12 12"><polyline points="3.2,4.6 6,7.4 8.8,4.6" fill="none" stroke="#c8c8c8" stroke-width="1.3" stroke-linecap="round" stroke-linejoin="round"/></svg><div class="a" style="left:1367px;top:79px;width:37.5px;height:18px;background:#2c2c2c;border-radius:4px;"></div><div class="a" style="left:1367px;top:79px;width:18.1px;height:18px;background:#4772b3;border-radius:4px 0 0 4px;"></div><svg class="a" style="left:1368px;top:80px;" width="16" height="16" viewBox="0 0 16 16"><path d="M1 3.8 A10.8 10.8 0 0 1 12.3 14.8" fill="none" stroke="#fff" stroke-width="1.1"/><circle cx="3.2" cy="12.4" r="1.9" fill="none" stroke="#fff" stroke-width="1.1"/><path d="M4.6 11 L14.4 1.8 M10.4 1.8 H14.4 V5.8" fill="none" stroke="#fff" stroke-width="1.1"/></svg><svg class="a" style="left:1389px;top:82.5px;" width="12" height="12" viewBox="0 0 12 12"><polyline points="3.2,4.6 6,7.4 8.8,4.6" fill="none" stroke="#c8c8c8" stroke-width="1.3" stroke-linecap="round" stroke-linejoin="round"/></svg><div class="a" style="left:1412px;top:79px;width:37.700000000000045px;height:18px;background:#2c2c2c;border-radius:4px;"></div><div class="a" style="left:1412px;top:79px;width:18.5px;height:18px;background:#4772b3;border-radius:4px 0 0 4px;"></div><svg class="a" style="left:1413px;top:80px;" width="17" height="16" viewBox="0 0 17 16"><circle cx="6.1" cy="10.6" r="4.8" fill="none" stroke="#fff" stroke-width="1.1"/><circle cx="10.1" cy="5.1" r="4.8" fill="#fff"/><path d="M6.8 6 L8.5 7.5" stroke="#4772b3" stroke-width="0.9"/></svg><svg class="a" style="left:1434px;top:82.5px;" width="12" height="12" viewBox="0 0 12 12"><polyline points="3.2,4.6 6,7.4 8.8,4.6" fill="none" stroke="#c8c8c8" stroke-width="1.3" stroke-linecap="round" stroke-linejoin="round"/></svg><div class="a" style="left:1457.1px;top:79px;width:17.5px;height:18px;background:#545454;border-radius:4px;"></div><svg class="a" style="left:1458px;top:80px;" width="16" height="16" viewBox="0 0 16 16"><rect x="2.5" y="5.5" width="8" height="8" fill="none" stroke="#ddd" stroke-width="1"/><path d="M5.5 4V2.5H13.5V10.5H12" fill="none" stroke="#ddd" stroke-width="1"/><path d="M5 9.5V11H6.5" fill="none" stroke="#ddd" stroke-width="1"/></svg><div class="a" style="left:1482px;top:79px;width:94.40000000000009px;height:18px;background:#2c2c2c;border-radius:4px;"></div><div class="a" style="left:1482px;top:79px;width:18.8px;height:18px;background:#545454;border-radius:4px 0 0 4px;"></div><div class="a" style="left:1500.8px;top:79px;width:18.9px;height:18px;background:#4772b3;"></div><div class="a" style="left:1519.7px;top:79px;width:18.9px;height:18px;background:#545454;"></div><div class="a" style="left:1538.6px;top:79px;width:18.8px;height:18px;background:#545454;"></div><svg class="a" style="left:1483px;top:80px;" width="17" height="16" viewBox="0 0 17 16"><circle cx="8.5" cy="8" r="6.2" fill="none" stroke="#ddd" stroke-width="1"/><ellipse cx="8.5" cy="8" rx="2.6" ry="6.2" fill="none" stroke="#ddd" stroke-width="0.9"/><path d="M2.3 8H14.7" stroke="#ddd" stroke-width="0.9"/></svg><svg class="a" style="left:1502px;top:80px;" width="17" height="16" viewBox="0 0 17 16"><circle cx="8.3" cy="8" r="6.3" fill="#fff"/></svg><svg class="a" style="left:1521px;top:80px;" width="17" height="16" viewBox="0 0 17 16"><circle cx="8.3" cy="8" r="6.2" fill="none" stroke="#ddd" stroke-width="1"/><path d="M8.3 1.8A6.2 6.2 0 0 1 8.3 14.2Z" fill="#ddd"/><path d="M8.3 8 L13 12 A6.2 6.2 0 0 1 8.3 14.2Z" fill="#9a9a9a"/></svg><svg class="a" style="left:1540px;top:80px;" width="17" height="16" viewBox="0 0 17 16"><circle cx="8.3" cy="8" r="6.2" fill="none" stroke="#ddd" stroke-width="1"/><path d="M4.5 7 A4 4 0 0 1 8 3.8" fill="none" stroke="#ddd" stroke-width="1.2"/><path d="M5 11.5 A5.5 5.5 0 0 0 13 10" fill="none" stroke="#9a9a9a" stroke-width="0.9"/></svg><svg class="a" style="left:1561px;top:82.5px;" width="12" height="12" viewBox="0 0 12 12"><polyline points="3.2,4.6 6,7.4 8.8,4.6" fill="none" stroke="#c8c8c8" stroke-width="1.3" stroke-linecap="round" stroke-linejoin="round"/></svg><div class="a" style="left:9px;top:109.6px;width:38px;height:33.70000000000002px;background:#2e2e2e;border-radius:4px;"></div><div class="a" style="left:9px;top:149.6px;width:38px;height:172.6px;background:#2e2e2e;border-radius:4px;"></div><div class="a" style="left:9px;top:330.4px;width:38px;height:32.60000000000002px;background:#2e2e2e;border-radius:4px;"></div><div class="a" style="left:9px;top:370.4px;width:38px;height:207.39999999999998px;background:#2e2e2e;border-radius:4px;"></div><div class="a" style="left:9px;top:585.2px;width:38px;height:33.5px;background:#2e2e2e;border-radius:4px;"></div><div class="a" style="left:9px;top:149.6px;width:38px;height:33.3px;background:#4772b3;border-radius:4px;"></div><svg class="a" style="left:13px;top:110px;" width="30" height="32" viewBox="0 0 30 32"><circle cx="15" cy="16" r="10" fill="none" stroke="#d8d8d8" stroke-width="2" stroke-dasharray="3.2 2.8"/><circle cx="15" cy="16" r="10" fill="none" stroke="#b03040" stroke-width="2" stroke-dasharray="2.8 3.2" stroke-dashoffset="3.1"/><path d="M15 10V14M15 18V22M9 16H13M17 16H21" stroke="#9a9a9a" stroke-width="1.3"/></svg><svg class="a" style="left:13px;top:151px;" width="30" height="30" viewBox="0 0 30 30"><path d="M6 21 L20 7 Q22 5 24 7 Q25.5 9 23.5 11 L9.5 24.5 L5.5 25.5 Z" fill="#f0f0f0"/><path d="M19.5 8 L23 11.5" stroke="#4772b3" stroke-width="1"/><path d="M6 25.5 Q12 21 18 22" fill="none" stroke="#8a8aa8" stroke-width="1"/></svg><svg class="a" style="left:13px;top:186px;" width="30" height="30" viewBox="0 0 30 30"><path d="M10 13 L17 6 L24 13 L17 20 Z" fill="none" stroke="#e6e6e6" stroke-width="1.5"/><path d="M11.5 13 L22.5 13 L17 18.5Z" fill="#e6e6e6"/><path d="M17 6V2.5" stroke="#e6e6e6" stroke-width="1.2"/><path d="M7.5 16 Q4 21 5 23.5 Q7.5 25.5 10 23.5 Q11 21 7.5 16Z" fill="#8e8e8e"/></svg><svg class="a" style="left:13px;top:220px;" width="30" height="30" viewBox="0 0 30 30"><rect x="10.5" y="5" width="9" height="13" rx="2" transform="rotate(45 15 12)" fill="#f0f0f0"/><ellipse cx="13.5" cy="22" rx="6" ry="4" fill="#d46a6a"/></svg><svg class="a" style="left:13px;top:254px;" width="30" height="32" viewBox="0 0 30 32"><path d="M12 17 L23 5 Q24.5 4 25 5.5 L15 19 Z" fill="#f0f0f0"/><path d="M10.5 18 Q14 16 15.5 19.5 Q14 23 9 21Z" fill="#f0f0f0"/><path d="M3 23.5 Q10 19 17 22 Q21 23.5 25 22" fill="none" stroke="#7fd3b0" stroke-width="2"/><path d="M3 25 Q9 23 14 24" fill="none" stroke="#b06060" stroke-width="1"/></svg><svg class="a" style="left:13px;top:289px;" width="30" height="32" viewBox="0 0 30 32"><circle cx="22" cy="10" r="2.5" fill="none" stroke="#e6e6e6" stroke-width="1.2"/><circle cx="20" cy="15" r="2.5" fill="none" stroke="#e6e6e6" stroke-width="1.2"/><path d="M12 9 L19.5 10 M13 22 L18.5 13" stroke="#e6e6e6" stroke-width="1.3"/><path d="M7.5 18V28M2.5 23H12.5" stroke="#e6e6e6" stroke-width="1.5"/><path d="M7.5 23V28M7.5 23H12.5" stroke="#c04050" stroke-width="1.5"/></svg><svg class="a" style="left:13px;top:332px;" width="30" height="30" viewBox="0 0 30 30"><path d="M6 16 L17 5.5 L20.5 9 L10 19.5 L7 20 Z" fill="none" stroke="#e6e6e6" stroke-width="1.3" stroke-linejoin="round"/><path d="M11 10.5 L15.5 15" stroke="#e6e6e6" stroke-width="1.2"/><path d="M16 6.5 Q18.5 3 20.5 2.5 Q23 2.5 23 5 Q22.5 7 19.5 9.5Z" fill="#f0f0f0"/><path d="M6.5 19 L11 16 L9 13Z" fill="#e6e6e6"/></svg><svg class="a" style="left:14px;top:332px;" width="12" height="12" viewBox="0 0 12 12"><path d="M5.5 1.5V10M1.5 5.5H10" stroke="#9ee8c6" stroke-width="2.2"/></svg><svg class="a" style="left:14px;top:372px;" width="12" height="12" viewBox="0 0 12 12"><path d="M5.5 1.5V10M1.5 5.5H10" stroke="#9ee8c6" stroke-width="2.2"/></svg><svg class="a" style="left:13px;top:371px;" width="30" height="32" viewBox="0 0 30 32"><path d="M9 26 L25 9" stroke="#9ee8c6" stroke-width="1.4"/></svg><svg class="a" style="left:14px;top:406px;" width="12" height="12" viewBox="0 0 12 12"><path d="M5.5 1.5V10M1.5 5.5H10" stroke="#9ee8c6" stroke-width="2.2"/></svg><svg class="a" style="left:13px;top:405px;" width="30" height="32" viewBox="0 0 30 32"><path d="M3 22.5 L10 14.5 L17 20 L26.5 13" fill="none" stroke="#9ee8c6" stroke-width="1.4"/></svg><svg class="a" style="left:14px;top:441px;" width="12" height="12" viewBox="0 0 12 12"><path d="M5.5 1.5V10M1.5 5.5H10" stroke="#9ee8c6" stroke-width="2.2"/></svg><svg class="a" style="left:13px;top:440px;" width="30" height="32" viewBox="0 0 30 32"><path d="M9.5 27.5 Q11 13 28 10" fill="none" stroke="#9ee8c6" stroke-width="1.4"/></svg><svg class="a" style="left:14px;top:476px;" width="12" height="12" viewBox="0 0 12 12"><path d="M5.5 1.5V10M1.5 5.5H10" stroke="#9ee8c6" stroke-width="2.2"/></svg><svg class="a" style="left:13px;top:475px;" width="30" height="32" viewBox="0 0 30 32"><path d="M6.5 28.5 Q10 21 17 18.5 Q26 14.5 27.5 9" fill="none" stroke="#9ee8c6" stroke-width="1.4"/></svg><svg class="a" style="left:14px;top:511px;" width="12" height="12" viewBox="0 0 12 12"><path d="M5.5 1.5V10M1.5 5.5H10" stroke="#9ee8c6" stroke-width="2.2"/></svg><svg class="a" style="left:13px;top:510px;" width="30" height="32" viewBox="0 0 30 32"><rect x="11" y="12" width="17" height="17" fill="none" stroke="#9ee8c6" stroke-width="1.4"/></svg><svg class="a" style="left:14px;top:546px;" width="12" height="12" viewBox="0 0 12 12"><path d="M5.5 1.5V10M1.5 5.5H10" stroke="#9ee8c6" stroke-width="2.2"/></svg><svg class="a" style="left:13px;top:545px;" width="30" height="32" viewBox="0 0 30 32"><circle cx="18" cy="15.5" r="9.3" fill="none" stroke="#9ee8c6" stroke-width="1.4"/></svg><svg class="a" style="left:13px;top:587px;" width="30" height="32" viewBox="0 0 30 32"><path d="M5 19 L17 7 Q19 5 21 7 Q22.5 9 20.5 11 L8.5 22.5 L5 23.5Z" fill="#e6e6e6"/><path d="M16 8.5L19.5 12" stroke="#2e2e2e" stroke-width="1"/><path d="M5 23 Q8 27 13 23 Q18 19 23 23" fill="none" stroke="#9ee8c6" stroke-width="1.3"/><path d="M29 27 L26 30 H29Z" fill="#bbb"/></svg><div class="t" style="left:75px;top:109.0px;font-size:11px;color:#ececec;">Camera Orthographic</div><div class="t" style="left:75px;top:129.0px;font-size:11px;color:#d4e35c;">(1) Cube.Carve</div><svg class="a" style="left:1495px;top:110.6px;" width="82" height="84" viewBox="0 0 82 84">
<line x1="40" y1="40" x2="40" y2="8" stroke="#2f86e8" stroke-width="2.2"/>
<line x1="40" y1="40" x2="72" y2="40" stroke="#f0384f" stroke-width="2.2"/>
<circle cx="7.5" cy="40" r="6.6" fill="#b1344a"/>
<circle cx="40" cy="72.5" r="6.6" fill="#2b62ad"/>
<circle cx="40" cy="8" r="8" fill="#2b8cf2"/>
<circle cx="40" cy="40" r="8" fill="#6fba0e"/>
<circle cx="72.5" cy="40" r="8" fill="#f53750"/>
<text x="40" y="12" font-size="11" text-anchor="middle" fill="#12345a" font-family="Liberation Sans">Z</text>
<text x="40" y="44" font-size="11" text-anchor="middle" fill="#2a4a05" font-family="Liberation Sans">Y</text>
<text x="72.5" y="44" font-size="11" text-anchor="middle" fill="#5a0a14" font-family="Liberation Sans">X</text>
</svg><svg class="a" style="left:1548px;top:191.2px;" width="28" height="28" viewBox="0 0 28 28"><circle cx="14" cy="14" r="13.5" fill="#333333"/></svg><svg class="a" style="left:1548px;top:222.1px;" width="28" height="28" viewBox="0 0 28 28"><circle cx="14" cy="14" r="13.5" fill="#333333"/></svg><svg class="a" style="left:1548px;top:253px;" width="28" height="28" viewBox="0 0 28 28"><circle cx="14" cy="14" r="13.5" fill="#333333"/></svg><svg class="a" style="left:1552px;top:195px;" width="20" height="20" viewBox="0 0 20 20"><circle cx="11.5" cy="8" r="5.5" fill="none" stroke="#e6e6e6" stroke-width="1.6"/><path d="M11.5 5.2V10.8M8.7 8H14.3" stroke="#e6e6e6" stroke-width="1.3"/><path d="M7.5 12 L3 16.5" stroke="#e6e6e6" stroke-width="2.2" stroke-linecap="round"/></svg><svg class="a" style="left:1552px;top:226px;" width="20" height="20" viewBox="0 0 20 20"><path d="M5 10 V6 Q5 4.5 6.3 4.5 Q7.5 4.5 7.5 6 V3.5 Q7.5 2 8.8 2 Q10 2 10 3.5 V3 Q10 1.5 11.3 1.5 Q12.5 1.5 12.5 3 V4 Q12.5 2.8 13.7 2.8 Q15 2.8 15 4 V11 Q15 17 10.5 17.5 Q7 17.5 5.5 15 L2.5 10.5 Q2 9 3.3 8.8 Q4.3 8.8 5 10Z" fill="#e6e6e6"/></svg><svg class="a" style="left:1552px;top:257px;" width="20" height="20" viewBox="0 0 20 20"><circle cx="6" cy="6" r="3.3" fill="#e6e6e6"/><circle cx="13" cy="6" r="3.3" fill="#e6e6e6"/><circle cx="6" cy="6" r="1.2" fill="#333"/><circle cx="13" cy="6" r="1.2" fill="#333"/><rect x="3" y="9.5" width="11" height="6.5" fill="#e6e6e6"/><path d="M14 12.5 L18 10 V16 L14 13.5Z" fill="#e6e6e6"/><rect x="1" y="11.5" width="2" height="3" fill="#e6e6e6"/></svg><div class="a" style="left:1575px;top:113px;width:10px;height:19px;background:#2a2a2a;border-radius:4px 0 0 4px;"></div><svg class="a" style="left:1576px;top:116px;" width="9" height="13" viewBox="0 0 9 13"><polyline points="6,2.5 2.5,6.5 6,10.5" fill="none" stroke="#c8c8c8" stroke-width="1.2"/></svg><div class="a" style="left:1588px;top:50px;width:331px;height:25px;background:#3d3d3d;border-radius:6px 6px 0 0;"></div><div class="a" style="left:1588px;top:75px;width:331px;height:20px;background:#282828;"></div><div class="a" style="left:1588px;top:95px;width:331px;height:20px;background:#2d2d2d;"></div><div class="a" style="left:1588px;top:115px;width:331px;height:20px;background:#282828;"></div><div class="a" style="left:1588px;top:135px;width:331px;height:20px;background:#2d2d2d;"></div><div class="a" style="left:1588px;top:155px;width:331px;height:20px;background:#282828;"></div><div class="a" style="left:1588px;top:175px;width:331px;height:20px;background:#2d2d2d;"></div><div class="a" style="left:1588px;top:195px;width:331px;height:20px;background:#282828;"></div><div class="a" style="left:1588px;top:215px;width:331px;height:20px;background:#2d2d2d;"></div><div class="a" style="left:1588px;top:235px;width:331px;height:20px;background:#282828;"></div><div class="a" style="left:1588px;top:255px;width:331px;height:20px;background:#2d2d2d;"></div><div class="a" style="left:1588px;top:275px;width:331px;height:20px;background:#282828;"></div><div class="a" style="left:1588px;top:295px;width:331px;height:20px;background:#2d2d2d;"></div><div class="a" style="left:1588px;top:315px;width:331px;height:20px;background:#282828;"></div><div class="a" style="left:1588px;top:335px;width:331px;height:20px;background:#2d2d2d;"></div><div class="a" style="left:1588px;top:355px;width:331px;height:19px;background:#282828;border-radius:0 0 6px 6px;"></div><div class="a" style="left:1597px;top:53.25px;width:29.25px;height:17.5px;background:#2c2c2c;border-radius:4px;"></div><svg class="a" style="left:1599px;top:54px;" width="18" height="16" viewBox="0 0 18 16"><rect x="1.5" y="1" width="5" height="2.5" fill="#ddd"/><path d="M3 3.5V11.5H6M3 7.5H6" fill="none" stroke="#ddd" stroke-width="0.9"/><rect x="7" y="6" width="7" height="3" fill="#ddd"/><rect x="7" y="10.5" width="7" height="3" fill="#ddd"/></svg><svg class="a" style="left:1615px;top:56px;" width="12" height="12" viewBox="0 0 12 12"><polyline points="3.2,4.6 6,7.4 8.8,4.6" fill="none" stroke="#c8c8c8" stroke-width="1.3" stroke-linecap="round" stroke-linejoin="round"/></svg><div class="a" style="left:1634.5px;top:53.25px;width:29.25px;height:17.5px;background:#2c2c2c;border-radius:4px;"></div><svg class="a" style="left:1636px;top:54px;" width="16" height="16" viewBox="0 0 16 16"><path d="M1.5 5V13.5H10" fill="none" stroke="#d8d8d8" stroke-width="1"/><path d="M3.5 3V11.5H12" fill="none" stroke="#d8d8d8" stroke-width="1"/><rect x="5.5" y="1.5" width="8" height="8" fill="none" stroke="#d8d8d8" stroke-width="1.1"/><path d="M6.5 8.5L9 5L11 7.5L12 6.5V8.5Z" fill="#d8d8d8"/></svg><svg class="a" style="left:1652px;top:56px;" width="12" height="12" viewBox="0 0 12 12"><polyline points="3.2,4.6 6,7.4 8.8,4.6" fill="none" stroke="#c8c8c8" stroke-width="1.3" stroke-linecap="round" stroke-linejoin="round"/></svg><div class="a" style="left:1688.25px;top:53.25px;width:108.75px;height:17.5px;background:#1d1d1d;border-radius:4px;"></div><svg class="a" style="left:1691px;top:54px;" width="16" height="16" viewBox="0 0 16 16"><circle cx="9.5" cy="6" r="4" fill="none" stroke="#ddd" stroke-width="1.2"/><path d="M6.6 8.9 L2.5 13" stroke="#ddd" stroke-width="1.3"/></svg><div class="a" style="left:1856.25px;top:53.25px;width:29.25px;height:17.5px;background:#2c2c2c;border-radius:4px;"></div><svg class="a" style="left:1857px;top:54px;" width="16" height="16" viewBox="0 0 16 16"><path d="M1.5 2H14.5L9.5 8V14L6.5 12V8Z" fill="none" stroke="#ddd" stroke-width="1.1"/></svg><svg class="a" style="left:1874px;top:56px;" width="12" height="12" viewBox="0 0 12 12"><polyline points="3.2,4.6 6,7.4 8.8,4.6" fill="none" stroke="#c8c8c8" stroke-width="1.3" stroke-linecap="round" stroke-linejoin="round"/></svg><div class="a" style="left:1893px;top:53.25px;width:18.25px;height:17.5px;background:#4a4a4a;border-radius:4px;"></div><svg class="a" style="left:1894px;top:54px;" width="17" height="16" viewBox="0 0 17 16"><rect x="1.5" y="4" width="11" height="3" fill="none" stroke="#bbb" stroke-width="1"/><path d="M2.5 7V14H11.5V7M5.5 10H8.5" fill="none" stroke="#bbb" stroke-width="1"/><circle cx="12.5" cy="4" r="3.3" fill="#ddd"/><path d="M12.5 2.3V5.7M10.8 4H14.2" stroke="#4a4a4a" stroke-width="1"/></svg><svg class="a" style="left:1610px;top:80px;" width="15" height="15" viewBox="0 0 15 15"><rect x="1.5" y="1.5" width="12" height="3" fill="none" stroke="#e6e6e6" stroke-width="1.1"/><path d="M2.5 4.5V13.5H12.5V4.5M6 8H9" fill="none" stroke="#e6e6e6" stroke-width="1.1"/></svg><div class="t" style="left:1632px;top:79.0px;font-size:11px;color:#e6e6e6;">Scene Collection</div><svg class="a" style="left:1613px;top:102px;" width="10" height="10" viewBox="0 0 10 10"><path d="M1 2H9L5 8Z" fill="#d6d6d6"/></svg><div class="a" style="left:1633px;top:102px;width:10.5px;height:10.5px;background:#e6e6e6;border-radius:2px;"></div><svg class="a" style="left:1633px;top:102px;" width="11" height="11" viewBox="0 0 11 11"><path d="M2.5 5.5L4.5 7.5L8.5 3" fill="none" stroke="#222" stroke-width="1.5"/></svg><div class="a" style="left:1648px;top:98px;width:20px;height:19px;background:#4a4a4a;border-radius:4px;"></div><svg class="a" style="left:1650.5px;top:100px;" width="15" height="15" viewBox="0 0 15 15"><rect x="1.5" y="1.5" width="12" height="3" fill="none" stroke="#e6e6e6" stroke-width="1.1"/><path d="M2.5 4.5V13.5H12.5V4.5M6 8H9" fill="none" stroke="#e6e6e6" stroke-width="1.1"/></svg><div class="t" style="left:1672px;top:99.0px;font-size:11px;color:#e6e6e6;">Collection</div><div class="a" style="left:1637px;top:113px;width:1px;height:95px;background:#8a8a8a;"></div><div class="a" style="left:1637px;top:127px;width:11px;height:1px;background:#8a8a8a;"></div><svg class="a" style="left:1636px;top:123.5px;" width="8" height="8" viewBox="0 0 8 8"><path d="M1 0.5V6.5L6 3.5Z" fill="#e0e0e0"/></svg><div class="a" style="left:1637px;top:147px;width:11px;height:1px;background:#8a8a8a;"></div><svg class="a" style="left:1636px;top:143.5px;" width="8" height="8" viewBox="0 0 8 8"><path d="M1 0.5V6.5L6 3.5Z" fill="#e0e0e0"/></svg><div class="a" style="left:1637px;top:167px;width:11px;height:1px;background:#8a8a8a;"></div><svg class="a" style="left:1636px;top:163.5px;" width="8" height="8" viewBox="0 0 8 8"><path d="M1 0.5V6.5L6 3.5Z" fill="#e0e0e0"/></svg><div class="a" style="left:1637px;top:187px;width:11px;height:1px;background:#8a8a8a;"></div><svg class="a" style="left:1636px;top:183.5px;" width="8" height="8" viewBox="0 0 8 8"><path d="M1 0.5V6.5L6 3.5Z" fill="#e0e0e0"/></svg><div class="a" style="left:1637px;top:207px;width:11px;height:1px;background:#8a8a8a;"></div><svg class="a" style="left:1636px;top:203.5px;" width="8" height="8" viewBox="0 0 8 8"><path d="M1 0.5V6.5L6 3.5Z" fill="#e0e0e0"/></svg><svg class="a" style="left:1650px;top:119px;" width="16" height="15" viewBox="0 0 16 15"><circle cx="4.5" cy="3.6" r="3.2" fill="#f0a05a"/><circle cx="10" cy="3.6" r="3.2" fill="#f0a05a"/><circle cx="4.5" cy="3.6" r="1.1" fill="#2b2b2b"/><circle cx="10" cy="3.6" r="1.1" fill="#2b2b2b"/><rect x="3" y="7" width="8.5" height="6.5" fill="#f0a05a"/><path d="M12 10L15.5 8V13L12 11Z" fill="#f0a05a"/><rect x="1" y="9" width="2" height="2.5" fill="#f0a05a"/></svg><div class="t" style="left:1672px;top:119.0px;font-size:11px;color:#e6e6e6;">Cam_Carve</div><div class="a" style="left:1749px;top:117px;width:19.6px;height:20px;background:#4a4a4a;border-radius:4px;"></div><svg class="a" style="left:1751px;top:119.5px;" width="16" height="15" viewBox="0 0 16 15"><circle cx="4.5" cy="4" r="3" fill="none" stroke="#3fc99a" stroke-width="1.2"/><circle cx="10" cy="4" r="3" fill="none" stroke="#3fc99a" stroke-width="1.2"/><rect x="2" y="7.5" width="9.5" height="5.5" fill="none" stroke="#3fc99a" stroke-width="1.2"/><path d="M11.5 10L15 8V12.5L11.5 10.5" fill="none" stroke="#3fc99a" stroke-width="1.1"/></svg><svg class="a" style="left:1650px;top:139px;" width="16" height="15" viewBox="0 0 16 15"><circle cx="4.5" cy="3.6" r="3.2" fill="#f0a05a"/><circle cx="10" cy="3.6" r="3.2" fill="#f0a05a"/><circle cx="4.5" cy="3.6" r="1.1" fill="#2b2b2b"/><circle cx="10" cy="3.6" r="1.1" fill="#2b2b2b"/><rect x="3" y="7" width="8.5" height="6.5" fill="#f0a05a"/><path d="M12 10L15.5 8V13L12 11Z" fill="#f0a05a"/><rect x="1" y="9" width="2" height="2.5" fill="#f0a05a"/></svg><div class="t" style="left:1672px;top:139.0px;font-size:11px;color:#e6e6e6;">Camera</div><svg class="a" style="left:1733px;top:139.5px;" width="16" height="15" viewBox="0 0 16 15"><circle cx="4.5" cy="4" r="3" fill="none" stroke="#3fc99a" stroke-width="1.2"/><circle cx="10" cy="4" r="3" fill="none" stroke="#3fc99a" stroke-width="1.2"/><rect x="2" y="7.5" width="9.5" height="5.5" fill="none" stroke="#3fc99a" stroke-width="1.2"/><path d="M11.5 10L15 8V12.5L11.5 10.5" fill="none" stroke="#3fc99a" stroke-width="1.1"/></svg><svg class="a" style="left:1650px;top:159.5px;" width="16" height="15" viewBox="0 0 16 15"><path d="M1.5 1.5H14.5L8 14.5Z" fill="#f0a05a"/><path d="M5 4.5H11L8 10.5Z" fill="#2b2b2b"/></svg><div class="t" style="left:1672px;top:159.0px;font-size:11px;color:#e6e6e6;">Cube</div><svg class="a" style="left:1719px;top:159.5px;" width="16" height="15" viewBox="0 0 16 15"><path d="M2.5 13 L8 7.5 Q6.5 4 9 2 Q11 0.8 13 1.5 L10.5 4 L11.5 5 L14 2.5 Q14.8 5 13 6.8 Q11 8.5 8.5 7.5" fill="none" stroke="#6e9de0" stroke-width="1.3"/><path d="M2.5 13 L4 14.5 L9 9" fill="none" stroke="#6e9de0" stroke-width="1.3"/></svg><svg class="a" style="left:1740px;top:159.5px;" width="16" height="15" viewBox="0 0 16 15"><rect x="1" y="1" width="3" height="3" fill="none" stroke="#3fc99a" stroke-width="1.1"/><rect x="11.5" y="1" width="3" height="3" fill="none" stroke="#3fc99a" stroke-width="1.1"/><rect x="6.3" y="11" width="3" height="3" fill="none" stroke="#3fc99a" stroke-width="1.1"/><path d="M4 2.5H11.5M3 4L7 11M12.5 4L8.5 11" stroke="#3fc99a" stroke-width="1.1"/></svg><div class="a" style="left:1648px;top:178px;width:20px;height:19px;background:#5a5a5a;border-radius:4px;"></div><svg class="a" style="left:1650px;top:180px;" width="16" height="15" viewBox="0 0 16 15"><path d="M4 14 Q1 11 2.5 8 Q4 5.5 6.5 7 Q8.5 8.5 7 11 Q6 13 8.5 13.5 Q11.5 13.5 12 10 Q12.5 6.5 10 5 Q11 3 13 2" fill="none" stroke="#f0a05a" stroke-width="1.5"/></svg><div class="t" style="left:1672px;top:179.0px;font-size:11px;color:#e6e6e6;">Cube.Carve</div><svg class="a" style="left:1752px;top:179.5px;" width="16" height="15" viewBox="0 0 16 15"><path d="M2.5 12.5 Q0.5 8 4.5 5 L10 1.5 Q14 0.5 14 4.5 L11 10 Q8 14.5 2.5 12.5Z" fill="none" stroke="#6e9de0" stroke-width="1.2"/><circle cx="6.5" cy="9" r="3" fill="none" stroke="#6e9de0" stroke-width="1.2"/><circle cx="6.5" cy="9" r="1.2" fill="#6e9de0"/></svg><svg class="a" style="left:1772px;top:179.5px;" width="16" height="15" viewBox="0 0 16 15"><rect x="1" y="11" width="3" height="3" fill="none" stroke="#3fc99a" stroke-width="1.1"/><rect x="12" y="1" width="3" height="3" fill="none" stroke="#3fc99a" stroke-width="1.1"/><path d="M2.5 11 Q2.5 7 6 6.5 Q10 6 9.5 10 Q9 13 6 12 Q4 10.5 7 7 Q9.5 4 12 3" fill="none" stroke="#3fc99a" stroke-width="1.1"/></svg><svg class="a" style="left:1651px;top:199.5px;" width="15" height="16" viewBox="0 0 15 16"><circle cx="7.5" cy="6.5" r="5.5" fill="#f0a05a"/><path d="M5 5.5L6.5 8L7.5 6L8.5 8L10 5.5" fill="none" stroke="#2b2b2b" stroke-width="0.9"/><rect x="5" y="12" width="5" height="1" fill="#f0a05a"/><rect x="5.5" y="14" width="4" height="1" fill="#f0a05a"/></svg><div class="t" style="left:1672px;top:199.0px;font-size:11px;color:#e6e6e6;">Light</div><svg class="a" style="left:1719px;top:199px;" width="16" height="16" viewBox="0 0 16 16"><circle cx="8" cy="7.5" r="6" fill="none" stroke="#3fc99a" stroke-width="1.1"/><circle cx="8" cy="6.5" r="1.2" fill="#3fc99a"/><path d="M8 7.5V15" stroke="#3fc99a" stroke-width="1.1" stroke-dasharray="2 1"/></svg><div class="a" style="left:1633px;top:222px;width:10.5px;height:10.5px;background:#e6e6e6;border-radius:2px;"></div><svg class="a" style="left:1633px;top:222px;" width="11" height="11" viewBox="0 0 11 11"><path d="M2.5 5.5L4.5 7.5L8.5 3" fill="none" stroke="#222" stroke-width="1.5"/></svg><svg class="a" style="left:1651px;top:220px;" width="15" height="15" viewBox="0 0 15 15"><rect x="1.5" y="1.5" width="12" height="3" fill="none" stroke="#cfcfcf" stroke-width="1.1"/><path d="M2.5 4.5V13.5H12.5V4.5M6 8H9" fill="none" stroke="#cfcfcf" stroke-width="1.1"/></svg><div class="t" style="left:1672px;top:219.0px;font-size:11px;color:#8c8c8c;">Carve_Objects</div><svg class="a" style="left:1894.5px;top:100px;" width="16" height="14" viewBox="0 0 16 14"><path d="M1 7 Q8 0 15 7 Q8 14 1 7Z" fill="none" stroke="#e6e6e6" stroke-width="1.4"/><circle cx="8" cy="7" r="2.3" fill="#e6e6e6"/></svg><svg class="a" style="left:1894.5px;top:120px;" width="16" height="14" viewBox="0 0 16 14"><path d="M1 7 Q8 0 15 7 Q8 14 1 7Z" fill="none" stroke="#e6e6e6" stroke-width="1.4"/><circle cx="8" cy="7" r="2.3" fill="#e6e6e6"/></svg><svg class="a" style="left:1894.5px;top:140px;" width="16" height="14" viewBox="0 0 16 14"><path d="M1 7 Q8 0 15 7 Q8 14 1 7Z" fill="none" stroke="#e6e6e6" stroke-width="1.4"/><circle cx="8" cy="7" r="2.3" fill="#e6e6e6"/></svg><svg class="a" style="left:1894.5px;top:160px;" width="16" height="14" viewBox="0 0 16 14"><path d="M1 7 Q8 0 15 7 Q8 14 1 7Z" fill="none" stroke="#e6e6e6" stroke-width="1.4"/><circle cx="8" cy="7" r="2.3" fill="#e6e6e6"/></svg><svg class="a" style="left:1894.5px;top:180px;" width="16" height="14" viewBox="0 0 16 14"><path d="M1 7 Q8 0 15 7 Q8 14 1 7Z" fill="none" stroke="#e6e6e6" stroke-width="1.4"/><circle cx="8" cy="7" r="2.3" fill="#e6e6e6"/></svg><svg class="a" style="left:1894.5px;top:200px;" width="16" height="14" viewBox="0 0 16 14"><path d="M1 7 Q8 0 15 7 Q8 14 1 7Z" fill="none" stroke="#e6e6e6" stroke-width="1.4"/><circle cx="8" cy="7" r="2.3" fill="#e6e6e6"/></svg><svg class="a" style="left:1894.5px;top:220px;" width="16" height="14" viewBox="0 0 16 14"><path d="M1 7 Q8 0 15 7 Q8 14 1 7Z" fill="none" stroke="#7a7a7a" stroke-width="1.4"/><circle cx="8" cy="7" r="2.3" fill="#7a7a7a"/></svg><div class="a" style="left:1588px;top:377px;width:331px;height:25px;background:#3d3d3d;border-radius:6px 6px 0 0;"></div><div class="a" style="left:1588px;top:402px;width:331px;height:658px;background:#424242;border-radius:0 0 6px 6px;"></div><div class="a" style="left:1588px;top:402px;width:28px;height:658px;background:#232323;border-radius:0 0 0 6px;"></div><div class="a" style="left:1596.8px;top:380.5px;width:30.2px;height:18px;background:#2c2c2c;border-radius:4px;"></div><svg class="a" style="left:1599px;top:381px;" width="18" height="16" viewBox="0 0 18 16"><rect x="1.5" y="1.5" width="13" height="6" rx="3" fill="#e6e6e6"/><rect x="1.5" y="9" width="13" height="6" rx="3" fill="#e6e6e6"/><rect x="8" y="3" width="5" height="3" rx="1.5" fill="#2c2c2c"/><rect x="8" y="10.5" width="5" height="3" rx="1.5" fill="#2c2c2c"/></svg><svg class="a" style="left:1615px;top:383.5px;" width="12" height="12" viewBox="0 0 12 12"><polyline points="3.2,4.6 6,7.4 8.8,4.6" fill="none" stroke="#c8c8c8" stroke-width="1.3" stroke-linecap="round" stroke-linejoin="round"/></svg><svg class="a" style="left:1641.5px;top:382px;" width="15" height="15" viewBox="0 0 15 15"><path d="M1 4V1H4M11 1H14V4M14 11V14H11M4 14H1V11" fill="none" stroke="#d8d8d8" stroke-width="1"/><rect x="3.5" y="3.5" width="8" height="8" fill="#e6e6e6"/></svg><div class="t" style="left:1665px;top:380.5px;font-size:11px;color:#e6e6e6;">Cube.Carve</div><svg class="a" style="left:1894px;top:381px;" width="16" height="16" viewBox="0 0 16 16"><path d="M9 1.5 L14.5 7 L12.5 7.5 L10.5 10 L10.5 13 L3 5.5 L6 5.5 L8.5 3.5 Z" fill="none" stroke="#9d9d9d" stroke-width="1"/><path d="M6.5 9.5 L1.5 14.5" stroke="#9d9d9d" stroke-width="1"/></svg><div class="a" style="left:1590.2px;top:409.4px;width:27px;height:28.600000000000023px;background:#2b2b2b;border-radius:4px 0 0 4px;"></div><div class="a" style="left:1590.2px;top:447px;width:27px;height:26px;background:#2b2b2b;border-radius:4px 0 0 4px;"></div><div class="a" style="left:1590.2px;top:474.8px;width:27px;height:25.899999999999977px;background:#2b2b2b;border-radius:4px 0 0 4px;"></div><div class="a" style="left:1590.2px;top:503px;width:27px;height:26.399999999999977px;background:#2b2b2b;border-radius:4px 0 0 4px;"></div><div class="a" style="left:1590.2px;top:531.3px;width:27px;height:25.90000000000009px;background:#2b2b2b;border-radius:4px 0 0 4px;"></div><div class="a" style="left:1590.2px;top:559.4px;width:27px;height:26.0px;background:#2b2b2b;border-radius:4px 0 0 4px;"></div><div class="a" style="left:1590.2px;top:595.2px;width:27px;height:26.299999999999955px;background:#424242;border-radius:4px 0 0 4px;"></div><div class="a" style="left:1590.2px;top:623.5px;width:27px;height:25.899999999999977px;background:#2b2b2b;border-radius:4px 0 0 4px;"></div><div class="a" style="left:1590.2px;top:651.3px;width:27px;height:25.90000000000009px;background:#2b2b2b;border-radius:4px 0 0 4px;"></div><div class="a" style="left:1590.2px;top:679.6px;width:27px;height:25.399999999999977px;background:#2b2b2b;border-radius:4px 0 0 4px;"></div><div class="a" style="left:1590.2px;top:707.8px;width:27px;height:25.0px;background:#2b2b2b;border-radius:4px 0 0 4px;"></div><div class="a" style="left:1590.2px;top:735.6px;width:27px;height:25.0px;background:#2b2b2b;border-radius:4px 0 0 4px;"></div><div class="a" style="left:1590.2px;top:763.3px;width:27px;height:26.0px;background:#2b2b2b;border-radius:4px 0 0 4px;"></div><div class="a" style="left:1590.2px;top:799.4px;width:27px;height:26.899999999999977px;background:#2b2b2b;border-radius:4px 0 0 4px;"></div><svg class="a" style="left:1595.5px;top:415.7px;" width="16" height="16" viewBox="0 0 16 16"><path d="M4 1V6" stroke="#e6e6e6" stroke-width="1.2"/><path d="M2.5 7.5H5.5L6 12 Q4 14 2 12Z" fill="#e6e6e6"/><path d="M9 5 Q9 1.5 11.5 1.5 V4.5 H12.5 V1.5 Q15 1.5 15 5 Q15 6.5 13.2 7.2 V13 Q12 14.5 10.8 13 V7.2 Q9 6.5 9 5Z" fill="#e6e6e6"/></svg><svg class="a" style="left:1595.5px;top:452.0px;" width="16" height="16" viewBox="0 0 16 16"><rect x="1.5" y="4" width="13" height="10" fill="none" stroke="#e6e6e6" stroke-width="1.3"/><rect x="4" y="1.5" width="5" height="3" fill="#e6e6e6"/><path d="M3 7H10M3 9H10M3 11H10" stroke="#e6e6e6" stroke-width="0.9"/><rect x="11.5" y="6.5" width="2" height="2" fill="#e6e6e6"/><rect x="11.5" y="10" width="2" height="2" fill="#e6e6e6"/></svg><svg class="a" style="left:1595.5px;top:479.75px;" width="16" height="16" viewBox="0 0 16 16"><rect x="1.5" y="2" width="13" height="3" rx="1" fill="#e6e6e6"/><rect x="1.5" y="5" width="13" height="2" fill="#e6e6e6"/><rect x="4" y="6" width="8" height="8" fill="#e6e6e6"/><path d="M5.5 12.5 L8 9 L10.5 12.5Z" fill="#555"/></svg><svg class="a" style="left:1595.5px;top:508.20000000000005px;" width="16" height="16" viewBox="0 0 16 16"><path d="M1.5 5V14.5H11" fill="none" stroke="#e6e6e6" stroke-width="1"/><path d="M3.5 3V12.5H13" fill="none" stroke="#e6e6e6" stroke-width="1"/><rect x="5.5" y="1.5" width="9" height="9" fill="none" stroke="#e6e6e6" stroke-width="1.2"/><path d="M6.5 9.5L9.5 5.5L11.5 8L12.5 7V9.5Z" fill="#e6e6e6"/></svg><svg class="a" style="left:1595.5px;top:536.25px;" width="16" height="16" viewBox="0 0 16 16"><path d="M5 2 L1 10 Q0.8 13 4 13 H6 Q8 12.5 7 9Z" fill="#e6e6e6"/><circle cx="12" cy="3" r="2" fill="#e6e6e6"/><circle cx="10" cy="11" r="3.6" fill="#2b2b2b" stroke="#e6e6e6" stroke-width="1.2"/></svg><svg class="a" style="left:1595.5px;top:564.4px;" width="16" height="16" viewBox="0 0 16 16"><circle cx="8" cy="8" r="6" fill="none" stroke="#e06070" stroke-width="1.3"/><path d="M4 5 Q6 4 7 6 Q6 8 8 9 Q9 11 7 13 M10 3 Q12 6 11 9" fill="none" stroke="#e06070" stroke-width="1.5"/><path d="M1.5 14.5 L14.5 1.5" stroke="#e06070" stroke-width="1"/></svg><svg class="a" style="left:1595.5px;top:600.35px;" width="16" height="16" viewBox="0 0 16 16"><path d="M1 4V1H4M11 1H14V4M14 11V14H11M4 14H1V11" fill="none" stroke="#d89a60" stroke-width="1"/><rect x="3.5" y="3.5" width="8" height="8" fill="#f4a460"/></svg><svg class="a" style="left:1595.5px;top:628.45px;" width="16" height="16" viewBox="0 0 16 16"><path d="M2.5 13.5 L8 8 Q6.5 4 9 2 Q11 0.8 13.5 1.5 L11 4 L12 5 L14.5 2.5 Q15.3 5 13.5 6.8 Q11.5 8.5 8.5 8" fill="none" stroke="#6e9de0" stroke-width="2.2"/><path d="M2.5 13.5 L8.5 8" stroke="#6e9de0" stroke-width="2.8"/></svg><svg class="a" style="left:1595.5px;top:656.25px;" width="16" height="16" viewBox="0 0 16 16"><path d="M3 13 L9 7" stroke="#6e9de0" stroke-width="2.2"/><path d="M4 2V6M2 4H6M12 2V6M10 4H14M12 9V13M10 11H14" stroke="#dfe8f5" stroke-width="1.1"/></svg><svg class="a" style="left:1595.5px;top:684.3px;" width="16" height="16" viewBox="0 0 16 16"><circle cx="7.5" cy="8.5" r="5.5" fill="none" stroke="#6e9de0" stroke-width="1.1"/><circle cx="7.5" cy="8.5" r="3" fill="#6e9de0"/><circle cx="12.5" cy="3.5" r="2" fill="#dfe8f5"/><path d="M10 4 L13 1 M13.5 7 L15 8" stroke="#424242" stroke-width="2"/></svg><svg class="a" style="left:1595.5px;top:712.3px;" width="16" height="16" viewBox="0 0 16 16"><path d="M2.5 12.5 Q0.5 8 4.5 5 L10 1.5 Q14 0.5 14 4.5 L11 10 Q8 14.5 2.5 12.5Z" fill="none" stroke="#6e9de0" stroke-width="1.2"/><circle cx="6.5" cy="9" r="3" fill="none" stroke="#6e9de0" stroke-width="1.3"/><circle cx="6.5" cy="9" r="1.2" fill="#6e9de0"/></svg><svg class="a" style="left:1595.5px;top:740.1px;" width="16" height="16" viewBox="0 0 16 16"><rect x="1" y="11" width="3" height="3" fill="none" stroke="#3fc99a" stroke-width="1.1"/><rect x="12" y="1" width="3" height="3" fill="none" stroke="#3fc99a" stroke-width="1.1"/><path d="M2.5 11 Q2.5 7 6 6.5 Q10 6 9.5 10 Q9 13 6 12 Q4 10.5 7 7 Q9.5 4 12 3" fill="none" stroke="#3fc99a" stroke-width="1.2"/></svg><svg class="a" style="left:1595.5px;top:768.3px;" width="16" height="16" viewBox="0 0 16 16"><circle cx="8" cy="8" r="6.5" fill="#e06070"/><path d="M8 8H1.5A6.5 6.5 0 0 1 8 1.5Z" fill="#2b2b2b"/><path d="M8 8H14.5A6.5 6.5 0 0 1 8 14.5Z" fill="#2b2b2b"/><circle cx="8" cy="8" r="6.5" fill="none" stroke="#e06070" stroke-width="1"/><path d="M1.5 8A6.5 6.5 0 0 0 8 14.5V8Z" fill="#e06070"/></svg><svg class="a" style="left:1595.5px;top:804.8499999999999px;" width="16" height="16" viewBox="0 0 16 16"><rect x="1.0" y="1.0" width="2.5" height="2.5" fill="#e06070"/><rect x="1.0" y="3.5" width="2.5" height="2.5" fill="#2b2b2b"/><rect x="1.0" y="6.0" width="2.5" height="2.5" fill="#e06070"/><rect x="1.0" y="8.5" width="2.5" height="2.5" fill="#2b2b2b"/><rect x="1.0" y="11.0" width="2.5" height="2.5" fill="#e06070"/><rect x="1.0" y="13.5" width="2.5" height="2.5" fill="#2b2b2b"/><rect x="3.5" y="1.0" width="2.5" height="2.5" fill="#2b2b2b"/><rect x="3.5" y="3.5" width="2.5" height="2.5" fill="#e06070"/><rect x="3.5" y="6.0" width="2.5" height="2.5" fill="#2b2b2b"/><rect x="3.5" y="8.5" width="2.5" height="2.5" fill="#e06070"/><rect x="3.5" y="11.0" width="2.5" height="2.5" fill="#2b2b2b"/><rect x="3.5" y="13.5" width="2.5" height="2.5" fill="#e06070"/><rect x="6.0" y="1.0" width="2.5" height="2.5" fill="#e06070"/><rect x="6.0" y="3.5" width="2.5" height="2.5" fill="#2b2b2b"/><rect x="6.0" y="6.0" width="2.5" height="2.5" fill="#e06070"/><rect x="6.0" y="8.5" width="2.5" height="2.5" fill="#2b2b2b"/><rect x="6.0" y="11.0" width="2.5" height="2.5" fill="#e06070"/><rect x="6.0" y="13.5" width="2.5" height="2.5" fill="#2b2b2b"/><rect x="8.5" y="1.0" width="2.5" height="2.5" fill="#2b2b2b"/><rect x="8.5" y="3.5" width="2.5" height="2.5" fill="#e06070"/><rect x="8.5" y="6.0" width="2.5" height="2.5" fill="#2b2b2b"/><rect x="8.5" y="8.5" width="2.5" height="2.5" fill="#e06070"/><rect x="8.5" y="11.0" width="2.5" height="2.5" fill="#2b2b2b"/><rect x="8.5" y="13.5" width="2.5" height="2.5" fill="#e06070"/><rect x="11.0" y="1.0" width="2.5" height="2.5" fill="#e06070"/><rect x="11.0" y="3.5" width="2.5" height="2.5" fill="#2b2b2b"/><rect x="11.0" y="6.0" width="2.5" height="2.5" fill="#e06070"/><rect x="11.0" y="8.5" width="2.5" height="2.5" fill="#2b2b2b"/><rect x="11.0" y="11.0" width="2.5" height="2.5" fill="#e06070"/><rect x="11.0" y="13.5" width="2.5" height="2.5" fill="#2b2b2b"/><rect x="13.5" y="1.0" width="2.5" height="2.5" fill="#2b2b2b"/><rect x="13.5" y="3.5" width="2.5" height="2.5" fill="#e06070"/><rect x="13.5" y="6.0" width="2.5" height="2.5" fill="#2b2b2b"/><rect x="13.5" y="8.5" width="2.5" height="2.5" fill="#e06070"/><rect x="13.5" y="11.0" width="2.5" height="2.5" fill="#2b2b2b"/><rect x="13.5" y="13.5" width="2.5" height="2.5" fill="#e06070"/></svg><div class="a" style="left:1625.4px;top:411px;width:285.6px;height:17.7px;background:#1d1d1d;border-radius:4px;"></div><div class="a" style="left:1625.4px;top:411px;width:30.1px;height:17.7px;background:#2c2c2c;border-radius:4px 0 0 4px;"></div><svg class="a" style="left:1628px;top:412px;" width="15" height="15" viewBox="0 0 15 15"><path d="M1 4V1H4M11 1H14V4M14 11V14H11M4 14H1V11" fill="none" stroke="#d8d8d8" stroke-width="1"/><rect x="3.5" y="3.5" width="8" height="8" fill="#e6e6e6"/></svg><svg class="a" style="left:1643px;top:414px;" width="12" height="12" viewBox="0 0 12 12"><polyline points="3.4,4.7 6,7.3 8.6,4.7" fill="none" stroke="#c8c8c8" stroke-width="1.2" stroke-linecap="round" stroke-linejoin="round"/></svg><div class="t" style="left:1663px;top:412.0px;font-size:11px;color:#e6e6e6;">Cube.Carve</div><div class="a" style="left:1616px;top:461px;width:303px;height:1px;background:#4a4a4a;"></div><div class="a" style="left:1616px;top:462px;width:303px;height:254px;background:#3b3b3b;"></div><div class="a" style="left:1616px;top:715px;width:303px;height:1px;background:#363636;"></div><svg class="a" style="left:1623px;top:445.5px;" width="10" height="10" viewBox="0 0 10 10"><path d="M1 2H9L5 8Z" fill="#a0a0a0"/></svg><div class="t" style="left:1638px;top:442.0px;font-size:11px;color:#e6e6e6;">Transform</div><svg class="a" style="left:1900px;top:446px;" width="12" height="8" viewBox="0 0 12 8"><rect x="1.0" y="1.0" width="1.2" height="1.2" fill="#8a8a8a"/><rect x="1.0" y="3.5" width="1.2" height="1.2" fill="#8a8a8a"/><rect x="3.5" y="1.0" width="1.2" height="1.2" fill="#8a8a8a"/><rect x="3.5" y="3.5" width="1.2" height="1.2" fill="#8a8a8a"/><rect x="6.0" y="1.0" width="1.2" height="1.2" fill="#8a8a8a"/><rect x="6.0" y="3.5" width="1.2" height="1.2" fill="#8a8a8a"/><rect x="8.5" y="1.0" width="1.2" height="1.2" fill="#8a8a8a"/><rect x="8.5" y="3.5" width="1.2" height="1.2" fill="#8a8a8a"/></svg><div class="a" style="left:1759.3px;top:470.9px;width:111.8px;height:58.1px;background:#545454;border-radius:4px;"></div><div class="a" style="left:1759.3px;top:489.79999999999995px;width:111.8px;height:1px;background:#3d3d3d;"></div><div class="a" style="left:1759.3px;top:509.2px;width:111.8px;height:1px;background:#3d3d3d;"></div><div class="t" style="left:1600px;width:150px;top:472.59999999999997px;text-align:right;font-size:11px;color:#e6e6e6;">Location X</div><div class="t" style="left:1760.0px;width:110px;top:472.59999999999997px;text-align:center;font-size:11px;color:#e6e6e6;">0 m</div><svg class="a" style="left:1874px;top:473.59999999999997px;" width="16" height="14" viewBox="0 0 16 14"><path d="M3.5 7V4.5 Q3.5 1.5 6 1.5 Q8.5 1.5 8.5 4" fill="none" stroke="#d0d0d0" stroke-width="1"/><rect x="5.5" y="7" width="8" height="6" fill="none" stroke="#d0d0d0" stroke-width="1"/><rect x="9" y="9.5" width="1" height="1" fill="#d0d0d0"/></svg><svg class="a" style="left:1898px;top:476.59999999999997px;" width="8" height="8" viewBox="0 0 8 8"><circle cx="4" cy="4" r="2.1" fill="#e0e0e0"/></svg><div class="t" style="left:1600px;width:150px;top:491.99999999999994px;text-align:right;font-size:11px;color:#e6e6e6;">Y</div><div class="t" style="left:1760.0px;width:110px;top:491.99999999999994px;text-align:center;font-size:11px;color:#e6e6e6;">0 m</div><svg class="a" style="left:1874px;top:492.99999999999994px;" width="16" height="14" viewBox="0 0 16 14"><path d="M3.5 7V4.5 Q3.5 1.5 6 1.5 Q8.5 1.5 8.5 4" fill="none" stroke="#d0d0d0" stroke-width="1"/><rect x="5.5" y="7" width="8" height="6" fill="none" stroke="#d0d0d0" stroke-width="1"/><rect x="9" y="9.5" width="1" height="1" fill="#d0d0d0"/></svg><svg class="a" style="left:1898px;top:495.99999999999994px;" width="8" height="8" viewBox="0 0 8 8"><circle cx="4" cy="4" r="2.1" fill="#e0e0e0"/></svg><div class="t" style="left:1600px;width:150px;top:511.4px;text-align:right;font-size:11px;color:#e6e6e6;">Z</div><div class="t" style="left:1760.0px;width:110px;top:511.4px;text-align:center;font-size:11px;color:#e6e6e6;">0 m</div><svg class="a" style="left:1874px;top:512.4px;" width="16" height="14" viewBox="0 0 16 14"><path d="M3.5 7V4.5 Q3.5 1.5 6 1.5 Q8.5 1.5 8.5 4" fill="none" stroke="#d0d0d0" stroke-width="1"/><rect x="5.5" y="7" width="8" height="6" fill="none" stroke="#d0d0d0" stroke-width="1"/><rect x="9" y="9.5" width="1" height="1" fill="#d0d0d0"/></svg><svg class="a" style="left:1898px;top:515.4px;" width="8" height="8" viewBox="0 0 8 8"><circle cx="4" cy="4" r="2.1" fill="#e0e0e0"/></svg><div class="a" style="left:1759.3px;top:536.1px;width:111.8px;height:58.1px;background:#545454;border-radius:4px;"></div><div class="a" style="left:1759.3px;top:555.0px;width:111.8px;height:1px;background:#3d3d3d;"></div><div class="a" style="left:1759.3px;top:574.4px;width:111.8px;height:1px;background:#3d3d3d;"></div><div class="t" style="left:1600px;width:150px;top:537.8000000000001px;text-align:right;font-size:11px;color:#e6e6e6;">Rotation X</div><div class="t" style="left:1760.0px;width:110px;top:537.8000000000001px;text-align:center;font-size:11px;color:#e6e6e6;">-90°</div><svg class="a" style="left:1874px;top:538.8000000000001px;" width="16" height="14" viewBox="0 0 16 14"><path d="M3.5 7V4.5 Q3.5 1.5 6 1.5 Q8.5 1.5 8.5 4" fill="none" stroke="#d0d0d0" stroke-width="1"/><rect x="5.5" y="7" width="8" height="6" fill="none" stroke="#d0d0d0" stroke-width="1"/><rect x="9" y="9.5" width="1" height="1" fill="#d0d0d0"/></svg><svg class="a" style="left:1898px;top:541.8000000000001px;" width="8" height="8" viewBox="0 0 8 8"><circle cx="4" cy="4" r="2.1" fill="#e0e0e0"/></svg><div class="t" style="left:1600px;width:150px;top:557.2px;text-align:right;font-size:11px;color:#e6e6e6;">Y</div><div class="t" style="left:1760.0px;width:110px;top:557.2px;text-align:center;font-size:11px;color:#e6e6e6;">0°</div><svg class="a" style="left:1874px;top:558.2px;" width="16" height="14" viewBox="0 0 16 14"><path d="M3.5 7V4.5 Q3.5 1.5 6 1.5 Q8.5 1.5 8.5 4" fill="none" stroke="#d0d0d0" stroke-width="1"/><rect x="5.5" y="7" width="8" height="6" fill="none" stroke="#d0d0d0" stroke-width="1"/><rect x="9" y="9.5" width="1" height="1" fill="#d0d0d0"/></svg><svg class="a" style="left:1898px;top:561.2px;" width="8" height="8" viewBox="0 0 8 8"><circle cx="4" cy="4" r="2.1" fill="#e0e0e0"/></svg><div class="t" style="left:1600px;width:150px;top:576.6px;text-align:right;font-size:11px;color:#e6e6e6;">Z</div><div class="t" style="left:1760.0px;width:110px;top:576.6px;text-align:center;font-size:11px;color:#e6e6e6;">0°</div><svg class="a" style="left:1874px;top:577.6px;" width="16" height="14" viewBox="0 0 16 14"><path d="M3.5 7V4.5 Q3.5 1.5 6 1.5 Q8.5 1.5 8.5 4" fill="none" stroke="#d0d0d0" stroke-width="1"/><rect x="5.5" y="7" width="8" height="6" fill="none" stroke="#d0d0d0" stroke-width="1"/><rect x="9" y="9.5" width="1" height="1" fill="#d0d0d0"/></svg><svg class="a" style="left:1898px;top:580.6px;" width="8" height="8" viewBox="0 0 8 8"><circle cx="4" cy="4" r="2.1" fill="#e0e0e0"/></svg><div class="a" style="left:1759.3px;top:625.7px;width:111.8px;height:58.1px;background:#545454;border-radius:4px;"></div><div class="a" style="left:1759.3px;top:644.6px;width:111.8px;height:1px;background:#3d3d3d;"></div><div class="a" style="left:1759.3px;top:664.0px;width:111.8px;height:1px;background:#3d3d3d;"></div><div class="t" style="left:1600px;width:150px;top:627.4000000000001px;text-align:right;font-size:11px;color:#e6e6e6;">Scale X</div><div class="t" style="left:1760.0px;width:110px;top:627.4000000000001px;text-align:center;font-size:11px;color:#e6e6e6;">1.000</div><svg class="a" style="left:1874px;top:628.4000000000001px;" width="16" height="14" viewBox="0 0 16 14"><path d="M3.5 7V4.5 Q3.5 1.5 6 1.5 Q8.5 1.5 8.5 4" fill="none" stroke="#d0d0d0" stroke-width="1"/><rect x="5.5" y="7" width="8" height="6" fill="none" stroke="#d0d0d0" stroke-width="1"/><rect x="9" y="9.5" width="1" height="1" fill="#d0d0d0"/></svg><svg class="a" style="left:1898px;top:631.4000000000001px;" width="8" height="8" viewBox="0 0 8 8"><circle cx="4" cy="4" r="2.1" fill="#e0e0e0"/></svg><div class="t" style="left:1600px;width:150px;top:646.8000000000001px;text-align:right;font-size:11px;color:#e6e6e6;">Y</div><div class="t" style="left:1760.0px;width:110px;top:646.8000000000001px;text-align:center;font-size:11px;color:#e6e6e6;">1.000</div><svg class="a" style="left:1874px;top:647.8000000000001px;" width="16" height="14" viewBox="0 0 16 14"><path d="M3.5 7V4.5 Q3.5 1.5 6 1.5 Q8.5 1.5 8.5 4" fill="none" stroke="#d0d0d0" stroke-width="1"/><rect x="5.5" y="7" width="8" height="6" fill="none" stroke="#d0d0d0" stroke-width="1"/><rect x="9" y="9.5" width="1" height="1" fill="#d0d0d0"/></svg><svg class="a" style="left:1898px;top:650.8000000000001px;" width="8" height="8" viewBox="0 0 8 8"><circle cx="4" cy="4" r="2.1" fill="#e0e0e0"/></svg><div class="t" style="left:1600px;width:150px;top:666.2px;text-align:right;font-size:11px;color:#e6e6e6;">Z</div><div class="t" style="left:1760.0px;width:110px;top:666.2px;text-align:center;font-size:11px;color:#e6e6e6;">1.000</div><svg class="a" style="left:1874px;top:667.2px;" width="16" height="14" viewBox="0 0 16 14"><path d="M3.5 7V4.5 Q3.5 1.5 6 1.5 Q8.5 1.5 8.5 4" fill="none" stroke="#d0d0d0" stroke-width="1"/><rect x="5.5" y="7" width="8" height="6" fill="none" stroke="#d0d0d0" stroke-width="1"/><rect x="9" y="9.5" width="1" height="1" fill="#d0d0d0"/></svg><svg class="a" style="left:1898px;top:670.2px;" width="8" height="8" viewBox="0 0 8 8"><circle cx="4" cy="4" r="2.1" fill="#e0e0e0"/></svg><div class="t" style="left:1600px;width:150px;top:602.0px;text-align:right;font-size:11px;color:#e6e6e6;">Mode</div><div class="a" style="left:1759.3px;top:601.1px;width:111.8px;height:18px;background:#2c2c2c;border-radius:4px;"></div><div class="t" style="left:1765px;top:602.0px;font-size:11px;color:#e6e6e6;">XYZ Euler</div><svg class="a" style="left:1858px;top:604.5px;" width="12" height="12" viewBox="0 0 12 12"><polyline points="3.2,4.6 6,7.4 8.8,4.6" fill="none" stroke="#c8c8c8" stroke-width="1.3" stroke-linecap="round" stroke-linejoin="round"/></svg><svg class="a" style="left:1898px;top:606px;" width="8" height="8" viewBox="0 0 8 8"><circle cx="4" cy="4" r="2.1" fill="#e0e0e0"/></svg><svg class="a" style="left:1637px;top:701px;" width="10" height="10" viewBox="0 0 10 10"><path d="M2 1V9L8 5Z" fill="#a0a0a0"/></svg><div class="t" style="left:1652px;top:698.0px;font-size:11px;color:#e6e6e6;">Delta Transform</div><svg class="a" style="left:1623px;top:724.4px;" width="10" height="10" viewBox="0 0 10 10"><path d="M2 1V9L8 5Z" fill="#a0a0a0"/></svg><div class="t" style="left:1638px;top:721.4px;font-size:11px;color:#e6e6e6;">Relations</div><svg class="a" style="left:1900px;top:725.4px;" width="12" height="8" viewBox="0 0 12 8"><rect x="1.0" y="1.0" width="1.2" height="1.2" fill="#8a8a8a"/><rect x="1.0" y="3.5" width="1.2" height="1.2" fill="#8a8a8a"/><rect x="3.5" y="1.0" width="1.2" height="1.2" fill="#8a8a8a"/><rect x="3.5" y="3.5" width="1.2" height="1.2" fill="#8a8a8a"/><rect x="6.0" y="1.0" width="1.2" height="1.2" fill="#8a8a8a"/><rect x="6.0" y="3.5" width="1.2" height="1.2" fill="#8a8a8a"/><rect x="8.5" y="1.0" width="1.2" height="1.2" fill="#8a8a8a"/><rect x="8.5" y="3.5" width="1.2" height="1.2" fill="#8a8a8a"/></svg><svg class="a" style="left:1623px;top:748.5px;" width="10" height="10" viewBox="0 0 10 10"><path d="M2 1V9L8 5Z" fill="#a0a0a0"/></svg><div class="t" style="left:1638px;top:745.5px;font-size:11px;color:#e6e6e6;">Collections</div><svg class="a" style="left:1900px;top:749.5px;" width="12" height="8" viewBox="0 0 12 8"><rect x="1.0" y="1.0" width="1.2" height="1.2" fill="#8a8a8a"/><rect x="1.0" y="3.5" width="1.2" height="1.2" fill="#8a8a8a"/><rect x="3.5" y="1.0" width="1.2" height="1.2" fill="#8a8a8a"/><rect x="3.5" y="3.5" width="1.2" height="1.2" fill="#8a8a8a"/><rect x="6.0" y="1.0" width="1.2" height="1.2" fill="#8a8a8a"/><rect x="6.0" y="3.5" width="1.2" height="1.2" fill="#8a8a8a"/><rect x="8.5" y="1.0" width="1.2" height="1.2" fill="#8a8a8a"/><rect x="8.5" y="3.5" width="1.2" height="1.2" fill="#8a8a8a"/></svg><svg class="a" style="left:1623px;top:772.6px;" width="10" height="10" viewBox="0 0 10 10"><path d="M2 1V9L8 5Z" fill="#a0a0a0"/></svg><div class="t" style="left:1638px;top:769.6px;font-size:11px;color:#e6e6e6;">Instancing</div><svg class="a" style="left:1900px;top:773.6px;" width="12" height="8" viewBox="0 0 12 8"><rect x="1.0" y="1.0" width="1.2" height="1.2" fill="#8a8a8a"/><rect x="1.0" y="3.5" width="1.2" height="1.2" fill="#8a8a8a"/><rect x="3.5" y="1.0" width="1.2" height="1.2" fill="#8a8a8a"/><rect x="3.5" y="3.5" width="1.2" height="1.2" fill="#8a8a8a"/><rect x="6.0" y="1.0" width="1.2" height="1.2" fill="#8a8a8a"/><rect x="6.0" y="3.5" width="1.2" height="1.2" fill="#8a8a8a"/><rect x="8.5" y="1.0" width="1.2" height="1.2" fill="#8a8a8a"/><rect x="8.5" y="3.5" width="1.2" height="1.2" fill="#8a8a8a"/></svg><svg class="a" style="left:1623px;top:796.7px;" width="10" height="10" viewBox="0 0 10 10"><path d="M2 1V9L8 5Z" fill="#a0a0a0"/></svg><div class="t" style="left:1638px;top:793.7px;font-size:11px;color:#e6e6e6;">Motion Paths</div><svg class="a" style="left:1900px;top:797.7px;" width="12" height="8" viewBox="0 0 12 8"><rect x="1.0" y="1.0" width="1.2" height="1.2" fill="#8a8a8a"/><rect x="1.0" y="3.5" width="1.2" height="1.2" fill="#8a8a8a"/><rect x="3.5" y="1.0" width="1.2" height="1.2" fill="#8a8a8a"/><rect x="3.5" y="3.5" width="1.2" height="1.2" fill="#8a8a8a"/><rect x="6.0" y="1.0" width="1.2" height="1.2" fill="#8a8a8a"/><rect x="6.0" y="3.5" width="1.2" height="1.2" fill="#8a8a8a"/><rect x="8.5" y="1.0" width="1.2" height="1.2" fill="#8a8a8a"/><rect x="8.5" y="3.5" width="1.2" height="1.2" fill="#8a8a8a"/></svg><svg class="a" style="left:1623px;top:820.3px;" width="10" height="10" viewBox="0 0 10 10"><path d="M2 1V9L8 5Z" fill="#a0a0a0"/></svg><div class="t" style="left:1638px;top:817.3px;font-size:11px;color:#e6e6e6;">Visibility</div><svg class="a" style="left:1900px;top:821.3px;" width="12" height="8" viewBox="0 0 12 8"><rect x="1.0" y="1.0" width="1.2" height="1.2" fill="#8a8a8a"/><rect x="1.0" y="3.5" width="1.2" height="1.2" fill="#8a8a8a"/><rect x="3.5" y="1.0" width="1.2" height="1.2" fill="#8a8a8a"/><rect x="3.5" y="3.5" width="1.2" height="1.2" fill="#8a8a8a"/><rect x="6.0" y="1.0" width="1.2" height="1.2" fill="#8a8a8a"/><rect x="6.0" y="3.5" width="1.2" height="1.2" fill="#8a8a8a"/><rect x="8.5" y="1.0" width="1.2" height="1.2" fill="#8a8a8a"/><rect x="8.5" y="3.5" width="1.2" height="1.2" fill="#8a8a8a"/></svg><svg class="a" style="left:1623px;top:844.4px;" width="10" height="10" viewBox="0 0 10 10"><path d="M2 1V9L8 5Z" fill="#a0a0a0"/></svg><div class="t" style="left:1638px;top:841.4px;font-size:11px;color:#e6e6e6;">Viewport Display</div><svg class="a" style="left:1900px;top:845.4px;" width="12" height="8" viewBox="0 0 12 8"><rect x="1.0" y="1.0" width="1.2" height="1.2" fill="#8a8a8a"/><rect x="1.0" y="3.5" width="1.2" height="1.2" fill="#8a8a8a"/><rect x="3.5" y="1.0" width="1.2" height="1.2" fill="#8a8a8a"/><rect x="3.5" y="3.5" width="1.2" height="1.2" fill="#8a8a8a"/><rect x="6.0" y="1.0" width="1.2" height="1.2" fill="#8a8a8a"/><rect x="6.0" y="3.5" width="1.2" height="1.2" fill="#8a8a8a"/><rect x="8.5" y="1.0" width="1.2" height="1.2" fill="#8a8a8a"/><rect x="8.5" y="3.5" width="1.2" height="1.2" fill="#8a8a8a"/></svg><svg class="a" style="left:1623px;top:868.6px;" width="10" height="10" viewBox="0 0 10 10"><path d="M2 1V9L8 5Z" fill="#a0a0a0"/></svg><div class="t" style="left:1638px;top:865.6px;font-size:11px;color:#e6e6e6;">Custom Properties</div><svg class="a" style="left:1900px;top:869.6px;" width="12" height="8" viewBox="0 0 12 8"><rect x="1.0" y="1.0" width="1.2" height="1.2" fill="#8a8a8a"/><rect x="1.0" y="3.5" width="1.2" height="1.2" fill="#8a8a8a"/><rect x="3.5" y="1.0" width="1.2" height="1.2" fill="#8a8a8a"/><rect x="3.5" y="3.5" width="1.2" height="1.2" fill="#8a8a8a"/><rect x="6.0" y="1.0" width="1.2" height="1.2" fill="#8a8a8a"/><rect x="6.0" y="3.5" width="1.2" height="1.2" fill="#8a8a8a"/><rect x="8.5" y="1.0" width="1.2" height="1.2" fill="#8a8a8a"/><rect x="8.5" y="3.5" width="1.2" height="1.2" fill="#8a8a8a"/></svg><div class="a" style="left:1px;top:984px;width:1584px;height:25px;background:#383838;border-radius:6px 6px 0 0;"></div><div class="a" style="left:1px;top:1009px;width:1584px;height:51px;background:#2b2b2b;border-radius:0 0 6px 6px;"></div><div class="a" style="left:9px;top:988.3px;width:30px;height:17.4px;background:#2c2c2c;border-radius:4px;"></div><svg class="a" style="left:11px;top:989px;" width="18" height="16" viewBox="0 0 18 16"><circle cx="8" cy="8" r="6.5" fill="#e6e6e6"/><path d="M9.5 3.5 L5.5 8 L9.5 12.5" fill="none" stroke="#2c2c2c" stroke-width="2"/></svg><svg class="a" style="left:27px;top:991.5px;" width="12" height="12" viewBox="0 0 12 12"><polyline points="3.2,4.6 6,7.4 8.8,4.6" fill="none" stroke="#c8c8c8" stroke-width="1.3" stroke-linecap="round" stroke-linejoin="round"/></svg><div class="a" style="left:45.7px;top:988.3px;width:127px;height:17.4px;background:#2c2c2c;border-radius:4px;"></div><div class="a" style="left:114px;top:988.3px;width:1px;height:17.4px;background:#383838;"></div><div class="t" style="left:53px;top:989.0px;font-size:11px;color:#e6e6e6;">Playback</div><svg class="a" style="left:102px;top:991.5px;" width="12" height="12" viewBox="0 0 12 12"><polyline points="3.2,4.6 6,7.4 8.8,4.6" fill="none" stroke="#c8c8c8" stroke-width="1.3" stroke-linecap="round" stroke-linejoin="round"/></svg><div class="t" style="left:122px;top:989.0px;font-size:11px;color:#e6e6e6;">Keying</div><svg class="a" style="left:160px;top:991.5px;" width="12" height="12" viewBox="0 0 12 12"><polyline points="3.2,4.6 6,7.4 8.8,4.6" fill="none" stroke="#c8c8c8" stroke-width="1.3" stroke-linecap="round" stroke-linejoin="round"/></svg><div class="t" style="left:181px;top:989.0px;font-size:11px;color:#e6e6e6;">View</div><div class="t" style="left:221px;top:989.0px;font-size:11px;color:#e6e6e6;">Marker</div><div class="a" style="left:711px;top:988.3px;width:18px;height:17.7px;background:#545454;border-radius:4px;"></div><svg class="a" style="left:712px;top:989px;" width="16" height="16" viewBox="0 0 16 16"><circle cx="8" cy="8" r="3.8" fill="#e6e6e6"/></svg><div class="a" style="left:736px;top:988.3px;width:118px;height:17.7px;background:#545454;border-radius:4px;"></div><div class="a" style="left:755.67px;top:988.3px;width:1px;height:17.7px;background:#3d3d3d;"></div><div class="a" style="left:775.34px;top:988.3px;width:1px;height:17.7px;background:#3d3d3d;"></div><div class="a" style="left:795.01px;top:988.3px;width:1px;height:17.7px;background:#3d3d3d;"></div><div class="a" style="left:814.6800000000001px;top:988.3px;width:1px;height:17.7px;background:#3d3d3d;"></div><div class="a" style="left:834.35px;top:988.3px;width:1px;height:17.7px;background:#3d3d3d;"></div><svg class="a" style="left:737.8px;top:989px;" width="16" height="16" viewBox="0 0 16 16"><rect x="3" y="3" width="1.5" height="10" fill="#e6e6e6"/><path d="M12.5 3V13L5 8Z" fill="#e6e6e6"/></svg><svg class="a" style="left:757.4699999999999px;top:989px;" width="16" height="16" viewBox="0 0 16 16"><path d="M1 8L4.5 4L8 8L4.5 12Z" fill="#e6e6e6"/><path d="M15 3.5V12.5L9 8Z" fill="#e6e6e6"/></svg><svg class="a" style="left:777.14px;top:989px;" width="16" height="16" viewBox="0 0 16 16"><path d="M12.5 2.5V13.5L4 8Z" fill="#e6e6e6"/></svg><svg class="a" style="left:796.81px;top:989px;" width="16" height="16" viewBox="0 0 16 16"><path d="M4 2.5V13.5L12.5 8Z" fill="#e6e6e6"/></svg><svg class="a" style="left:816.48px;top:989px;" width="16" height="16" viewBox="0 0 16 16"><path d="M1 3.5V12.5L7 8Z" fill="#e6e6e6"/><path d="M8 8L11.5 4L15 8L11.5 12Z" fill="#e6e6e6"/></svg><svg class="a" style="left:836.15px;top:989px;" width="16" height="16" viewBox="0 0 16 16"><rect x="11.5" y="3" width="1.5" height="10" fill="#e6e6e6"/><path d="M3.5 3V13L11 8Z" fill="#e6e6e6"/></svg><div class="a" style="left:1295.7px;top:988.3px;width:73.3px;height:17.7px;background:#545454;border-radius:4px;"></div><div class="t" style="left:1302.3px;width:60px;top:989.0px;text-align:center;font-size:11px;color:#e6e6e6;">1</div><div class="a" style="left:1376px;top:988.3px;width:190px;height:17.7px;background:#545454;border-radius:4px;"></div><div class="a" style="left:1376px;top:988.3px;width:19px;height:17.7px;background:#3d3d3d;border-radius:4px 0 0 4px;"></div><div class="a" style="left:1482.3px;top:988.3px;width:1px;height:17.7px;background:#3d3d3d;"></div><svg class="a" style="left:1377px;top:989px;" width="17" height="16" viewBox="0 0 17 16"><circle cx="8" cy="9" r="5.5" fill="none" stroke="#e6e6e6" stroke-width="1.2"/><path d="M8 5.5V9H10.5M6.5 1.5H9.5M8 1.5V3.5M13 3L14.5 4.5" fill="none" stroke="#e6e6e6" stroke-width="1.1"/></svg><div class="t" style="left:1410px;top:989.0px;font-size:11px;color:#e6e6e6;">Start</div><div class="t" style="left:1430px;width:40px;top:989.0px;text-align:right;font-size:11px;color:#e6e6e6;">1</div><div class="t" style="left:1497px;top:989.0px;font-size:11px;color:#e6e6e6;">End</div><div class="t" style="left:1514px;width:40px;top:989.0px;text-align:right;font-size:11px;color:#e6e6e6;">250</div><div class="a" style="left:1px;top:1009.3px;width:1584px;height:22.4px;background:#2b2b2b;"></div><div class="a" style="left:1px;top:1031.7px;width:1584px;height:17.3px;background:#414141;"></div><div class="a" style="left:1px;top:1049px;width:1584px;height:10.3px;background:#2b2b2b;border-radius:0 0 6px 6px;"></div><div class="a" style="left:53px;top:1031.7px;width:1px;height:17.3px;background:#2a2a2a;"></div><div class="a" style="left:82px;top:1031.7px;width:1px;height:17.3px;background:#3a3a3a;"></div><div class="a" style="left:112px;top:1031.7px;width:1px;height:17.3px;background:#2a2a2a;"></div><div class="a" style="left:141px;top:1031.7px;width:1px;height:17.3px;background:#3a3a3a;"></div><div class="a" style="left:170px;top:1031.7px;width:1px;height:17.3px;background:#2a2a2a;"></div><div class="a" style="left:200px;top:1031.7px;width:1px;height:17.3px;background:#3a3a3a;"></div><div class="a" style="left:229px;top:1031.7px;width:1px;height:17.3px;background:#2a2a2a;"></div><div class="a" style="left:259px;top:1031.7px;width:1px;height:17.3px;background:#3a3a3a;"></div><div class="a" style="left:288px;top:1031.7px;width:1px;height:17.3px;background:#2a2a2a;"></div><div class="a" style="left:318px;top:1031.7px;width:1px;height:17.3px;background:#3a3a3a;"></div><div class="a" style="left:347px;top:1031.7px;width:1px;height:17.3px;background:#2a2a2a;"></div><div class="a" style="left:377px;top:1031.7px;width:1px;height:17.3px;background:#3a3a3a;"></div><div class="a" style="left:406px;top:1031.7px;width:1px;height:17.3px;background:#2a2a2a;"></div><div class="a" style="left:436px;top:1031.7px;width:1px;height:17.3px;background:#3a3a3a;"></div><div class="a" style="left:465px;top:1031.7px;width:1px;height:17.3px;background:#2a2a2a;"></div><div class="a" style="left:495px;top:1031.7px;width:1px;height:17.3px;background:#3a3a3a;"></div><div class="a" style="left:524px;top:1031.7px;width:1px;height:17.3px;background:#2a2a2a;"></div><div class="a" style="left:554px;top:1031.7px;width:1px;height:17.3px;background:#3a3a3a;"></div><div class="a" style="left:583px;top:1031.7px;width:1px;height:17.3px;background:#2a2a2a;"></div><div class="a" style="left:612px;top:1031.7px;width:1px;height:17.3px;background:#3a3a3a;"></div><div class="a" style="left:642px;top:1031.7px;width:1px;height:17.3px;background:#2a2a2a;"></div><div class="a" style="left:671px;top:1031.7px;width:1px;height:17.3px;background:#3a3a3a;"></div><div class="a" style="left:701px;top:1031.7px;width:1px;height:17.3px;background:#2a2a2a;"></div><div class="a" style="left:730px;top:1031.7px;width:1px;height:17.3px;background:#3a3a3a;"></div><div class="a" style="left:760px;top:1031.7px;width:1px;height:17.3px;background:#2a2a2a;"></div><div class="a" style="left:789px;top:1031.7px;width:1px;height:17.3px;background:#3a3a3a;"></div><div class="a" style="left:819px;top:1031.7px;width:1px;height:17.3px;background:#2a2a2a;"></div><div class="a" style="left:848px;top:1031.7px;width:1px;height:17.3px;background:#3a3a3a;"></div><div class="a" style="left:878px;top:1031.7px;width:1px;height:17.3px;background:#2a2a2a;"></div><div class="a" style="left:907px;top:1031.7px;width:1px;height:17.3px;background:#3a3a3a;"></div><div class="a" style="left:937px;top:1031.7px;width:1px;height:17.3px;background:#2a2a2a;"></div><div class="a" style="left:966px;top:1031.7px;width:1px;height:17.3px;background:#3a3a3a;"></div><div class="a" style="left:995px;top:1031.7px;width:1px;height:17.3px;background:#2a2a2a;"></div><div class="a" style="left:1025px;top:1031.7px;width:1px;height:17.3px;background:#3a3a3a;"></div><div class="a" style="left:1054px;top:1031.7px;width:1px;height:17.3px;background:#2a2a2a;"></div><div class="a" style="left:1084px;top:1031.7px;width:1px;height:17.3px;background:#3a3a3a;"></div><div class="a" style="left:1113px;top:1031.7px;width:1px;height:17.3px;background:#2a2a2a;"></div><div class="a" style="left:1143px;top:1031.7px;width:1px;height:17.3px;background:#3a3a3a;"></div><div class="a" style="left:1172px;top:1031.7px;width:1px;height:17.3px;background:#2a2a2a;"></div><div class="a" style="left:1202px;top:1031.7px;width:1px;height:17.3px;background:#3a3a3a;"></div><div class="a" style="left:1231px;top:1031.7px;width:1px;height:17.3px;background:#2a2a2a;"></div><div class="a" style="left:1261px;top:1031.7px;width:1px;height:17.3px;background:#3a3a3a;"></div><div class="a" style="left:1290px;top:1031.7px;width:1px;height:17.3px;background:#2a2a2a;"></div><div class="a" style="left:1320px;top:1031.7px;width:1px;height:17.3px;background:#3a3a3a;"></div><div class="a" style="left:1349px;top:1031.7px;width:1px;height:17.3px;background:#2a2a2a;"></div><div class="a" style="left:1379px;top:1031.7px;width:1px;height:17.3px;background:#3a3a3a;"></div><div class="a" style="left:1408px;top:1031.7px;width:1px;height:17.3px;background:#2a2a2a;"></div><div class="a" style="left:1437px;top:1031.7px;width:1px;height:17.3px;background:#3a3a3a;"></div><div class="a" style="left:1467px;top:1031.7px;width:1px;height:17.3px;background:#2a2a2a;"></div><div class="a" style="left:1496px;top:1031.7px;width:1px;height:17.3px;background:#3a3a3a;"></div><div class="a" style="left:1526px;top:1031.7px;width:1px;height:17.3px;background:#2a2a2a;"></div><div class="t" style="left:91.037px;width:40px;top:1013.0px;text-align:center;font-size:11px;color:#a8a8a8;">10</div><div class="t" style="left:149.96699999999998px;width:40px;top:1013.0px;text-align:center;font-size:11px;color:#a8a8a8;">20</div><div class="t" style="left:208.897px;width:40px;top:1013.0px;text-align:center;font-size:11px;color:#a8a8a8;">30</div><div class="t" style="left:267.827px;width:40px;top:1013.0px;text-align:center;font-size:11px;color:#a8a8a8;">40</div><div class="t" style="left:326.757px;width:40px;top:1013.0px;text-align:center;font-size:11px;color:#a8a8a8;">50</div><div class="t" style="left:385.687px;width:40px;top:1013.0px;text-align:center;font-size:11px;color:#a8a8a8;">60</div><div class="t" style="left:444.61699999999996px;width:40px;top:1013.0px;text-align:center;font-size:11px;color:#a8a8a8;">70</div><div class="t" style="left:503.547px;width:40px;top:1013.0px;text-align:center;font-size:11px;color:#a8a8a8;">80</div><div class="t" style="left:562.477px;width:40px;top:1013.0px;text-align:center;font-size:11px;color:#a8a8a8;">90</div><div class="t" style="left:621.4069999999999px;width:40px;top:1013.0px;text-align:center;font-size:11px;color:#a8a8a8;">100</div><div class="t" style="left:680.337px;width:40px;top:1013.0px;text-align:center;font-size:11px;color:#a8a8a8;">110</div><div class="t" style="left:739.2669999999999px;width:40px;top:1013.0px;text-align:center;font-size:11px;color:#a8a8a8;">120</div><div class="t" style="left:798.197px;width:40px;top:1013.0px;text-align:center;font-size:11px;color:#a8a8a8;">130</div><div class="t" style="left:857.127px;width:40px;top:1013.0px;text-align:center;font-size:11px;color:#a8a8a8;">140</div><div class="t" style="left:916.057px;width:40px;top:1013.0px;text-align:center;font-size:11px;color:#a8a8a8;">150</div><div class="t" style="left:974.987px;width:40px;top:1013.0px;text-align:center;font-size:11px;color:#a8a8a8;">160</div><div class="t" style="left:1033.917px;width:40px;top:1013.0px;text-align:center;font-size:11px;color:#a8a8a8;">170</div><div class="t" style="left:1092.847px;width:40px;top:1013.0px;text-align:center;font-size:11px;color:#a8a8a8;">180</div><div class="t" style="left:1151.777px;width:40px;top:1013.0px;text-align:center;font-size:11px;color:#a8a8a8;">190</div><div class="t" style="left:1210.7069999999999px;width:40px;top:1013.0px;text-align:center;font-size:11px;color:#a8a8a8;">200</div><div class="t" style="left:1269.637px;width:40px;top:1013.0px;text-align:center;font-size:11px;color:#a8a8a8;">210</div><div class="t" style="left:1328.567px;width:40px;top:1013.0px;text-align:center;font-size:11px;color:#a8a8a8;">220</div><div class="t" style="left:1387.4969999999998px;width:40px;top:1013.0px;text-align:center;font-size:11px;color:#a8a8a8;">230</div><div class="t" style="left:1446.427px;width:40px;top:1013.0px;text-align:center;font-size:11px;color:#a8a8a8;">240</div><div class="t" style="left:1505.357px;width:40px;top:1013.0px;text-align:center;font-size:11px;color:#a8a8a8;">250</div><div class="a" style="left:45.7px;top:1011.7px;width:25.3px;height:17.6px;background:#4772b3;border-radius:4px;"></div><div class="t" style="left:48.3px;width:20px;top:1012.5px;text-align:center;font-size:11px;color:#ffffff;">1</div><div class="a" style="left:58px;top:1029px;width:2px;height:20px;background:#5680c2;"></div><div class="a" style="left:1px;top:1031.7px;width:52px;height:17.3px;background:#363636;"></div><div class="a" style="left:1527px;top:1031.7px;width:1px;height:17.3px;background:#1a1a1a;"></div><div class="a" style="left:1528px;top:1031.7px;width:57px;height:17.3px;background:#353535;"></div><div class="a" style="left:9px;top:1049.3px;width:1567px;height:7.4px;background:#656565;border-radius:4px;"></div><svg class="a" style="left:8px;top:1048px;" width="9" height="9" viewBox="0 0 9 9"><circle cx="4.5" cy="4.5" r="3.5" fill="#505050"/></svg><svg class="a" style="left:1568px;top:1048px;" width="9" height="9" viewBox="0 0 9 9"><circle cx="4.5" cy="4.5" r="3.5" fill="#8a8a8a"/></svg><div class="a" style="left:1579px;top:1021px;width:7px;height:20px;background:#2a2a2a;border-radius:4px 0 0 4px;"></div><svg class="a" style="left:1578px;top:1025px;" width="8" height="12" viewBox="0 0 8 12"><polyline points="5.5,2.5 2.5,6 5.5,9.5" fill="none" stroke="#c8c8c8" stroke-width="1.1"/></svg><div class="a" style="left:0px;top:1021px;width:6px;height:20px;background:#2a2a2a;border-radius:0 4px 4px 0;"></div><svg class="a" style="left:0px;top:1025px;" width="8" height="12" viewBox="0 0 8 12"><polyline points="2,2.5 5,6 2,9.5" fill="none" stroke="#c8c8c8" stroke-width="1.1"/></svg><div class="a" style="left:0px;top:1061px;width:1920px;height:19px;background:#2f2f2f;"></div><svg class="a" style="left:10px;top:1062px;" width="12" height="16" viewBox="0 0 12 16"><rect x="1.5" y="1.5" width="9" height="13" rx="3.5" fill="none" stroke="#cfcfcf" stroke-width="1"/><path d="M2 5.5V4 Q2 2 5.5 2V5.5Z" fill="#cfcfcf"/></svg><div class="t" style="left:34px;top:1062.0px;font-size:11px;color:#cfcfcf;">Grease Pencil Draw</div><svg class="a" style="left:142px;top:1062px;" width="18" height="16" viewBox="0 0 18 16"><rect x="1.5" y="1.5" width="9" height="13" rx="3.5" fill="none" stroke="#cfcfcf" stroke-width="1"/><path d="M2 5.5V4 Q2 2 5.5 2V5.5Z" fill="#cfcfcf"/><path d="M13 3V9M15.5 1.5V6" stroke="#cfcfcf" stroke-width="1"/></svg><div class="t" style="left:167px;top:1062.0px;font-size:11px;color:#cfcfcf;">Move</div><svg class="a" style="left:247px;top:1062px;" width="12" height="16" viewBox="0 0 12 16"><rect x="1.5" y="1.5" width="9" height="13" rx="3.5" fill="none" stroke="#cfcfcf" stroke-width="1"/><rect x="4.5" y="3" width="3" height="4" fill="#cfcfcf"/></svg><div class="t" style="left:270px;top:1062.0px;font-size:11px;color:#cfcfcf;">Rotate View</div><svg class="a" style="left:483px;top:1062px;" width="12" height="16" viewBox="0 0 12 16"><rect x="1.5" y="1.5" width="9" height="13" rx="3.5" fill="none" stroke="#cfcfcf" stroke-width="1"/><path d="M6.5 2 Q10 2 10 4V5.5H6.5Z" fill="#cfcfcf"/></svg><div class="t" style="left:506px;top:1062.0px;font-size:11px;color:#cfcfcf;">Draw Context Menu</div><div class="t" style="left:1285.7px;width:600px;top:1062.0px;text-align:right;font-size:11.2px;color:#b8b8b8;">Cube.Carve | Layers:0 | Frames:0 | Strokes:0 | Points:0 | Objects:0/5 | Mem: 27.8 MiB | 2.83.4</div><div class="a" style="left:48px;top:1078px;width:344px;height:2px;background:#ffffff;"></div><div class="a" style="left:883px;top:1078px;width:48px;height:2px;background:#4a4a4a;"></div></div></body></html>
